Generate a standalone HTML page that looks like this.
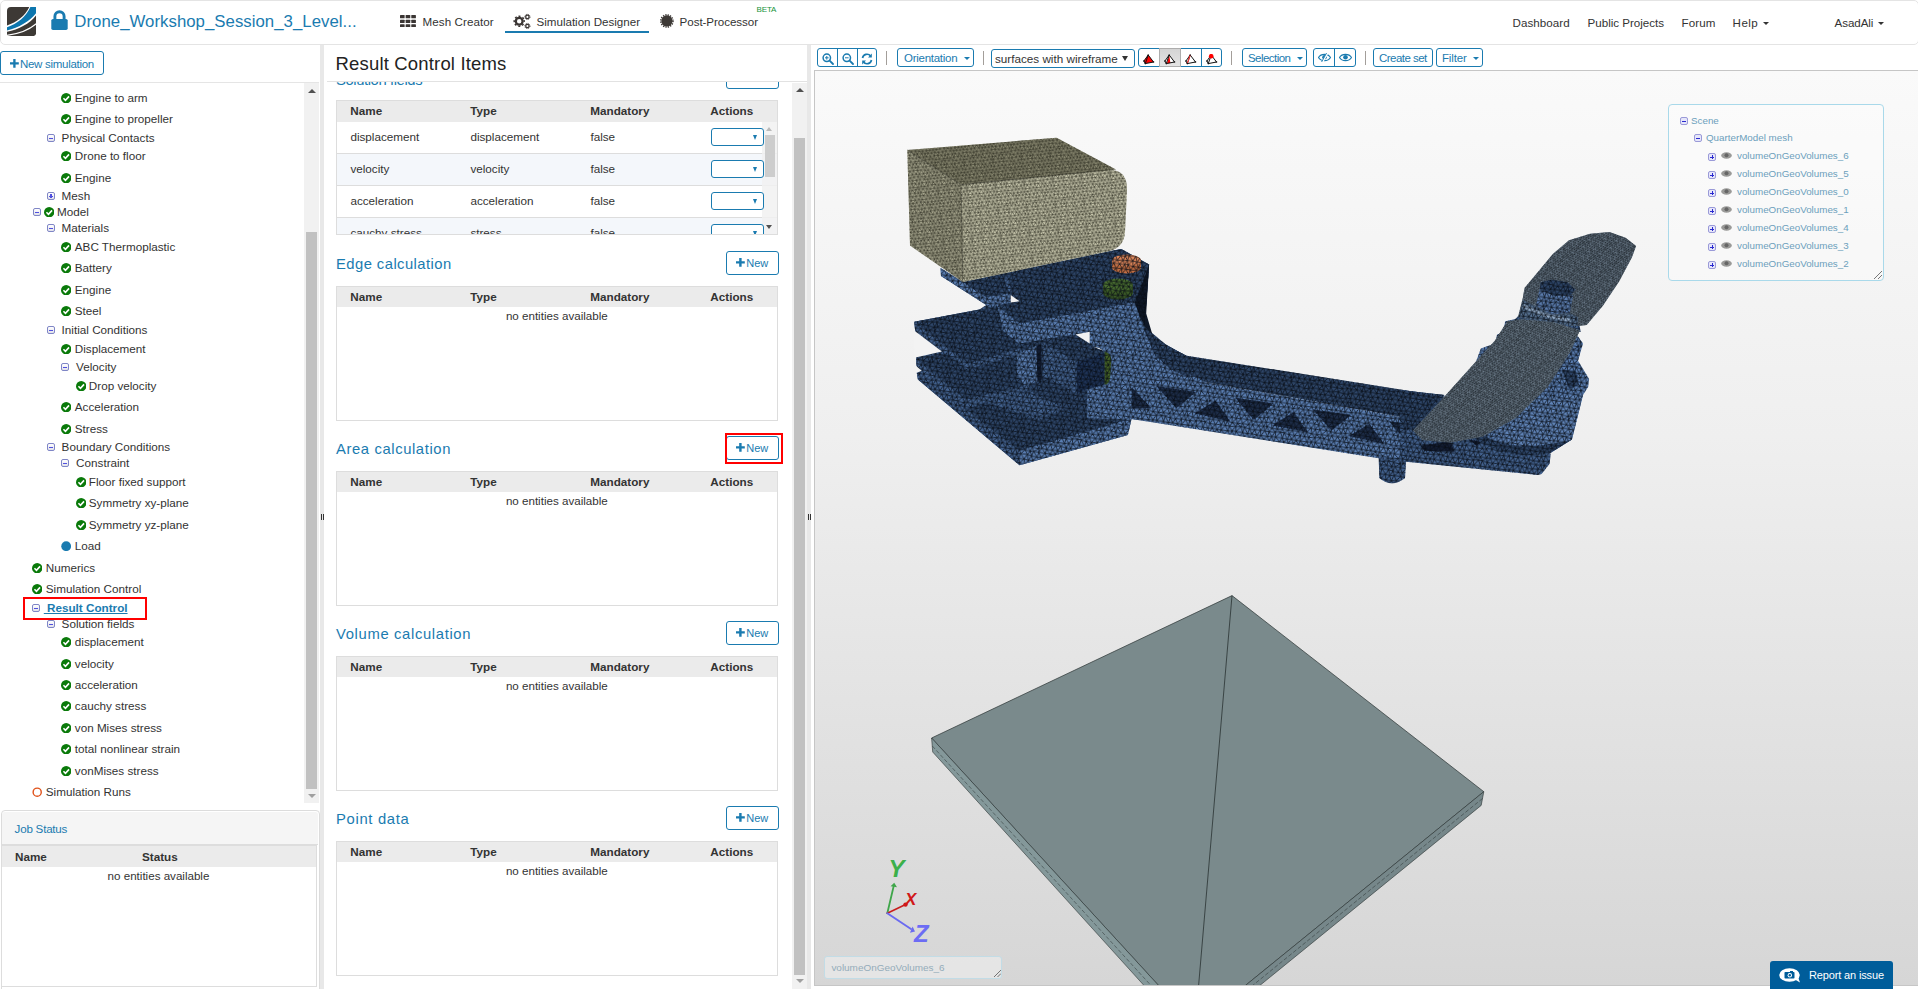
<!DOCTYPE html><html><head><meta charset="utf-8"><title>SimScale - Result Control Items</title><style>
*{box-sizing:border-box;margin:0;padding:0}
html,body{width:1918px;height:989px;overflow:hidden;background:#fff}
body{font-family:"Liberation Sans",sans-serif;font-size:12px;color:#333;position:relative}
.abs{position:absolute}
.lato{font-family:"Liberation Sans",sans-serif}
.t{position:absolute;white-space:nowrap;line-height:1}
.blue{color:#1a7bb0}
.btn{position:absolute;border:1px solid #1a7bb0;border-radius:3px;background:#fff;color:#1a7bb0}
#nav{position:absolute;left:0;top:0;width:1919px;height:45px;border:1px solid #e4e4e4;border-radius:5px;background:#fff}
.tr{position:absolute;white-space:nowrap;font-size:11.7px;line-height:14px;color:#333;height:14px}
.ck{position:absolute;width:10.4px;height:10.4px}
.tg{position:absolute;width:8.4px;height:8.4px;border:1px solid #7f86c6;border-radius:2px;background:linear-gradient(#fff,#e2e2ea)}
.tg i{position:absolute;left:1.2px;top:2.5px;width:4px;height:1.5px;background:#5050e0;display:block}
.tg b{position:absolute;left:2.4px;top:1.3px;width:1.6px;height:4px;background:#5050e0;display:block}
.th{position:absolute;background:#ebebeb;height:20px}
.th span{position:absolute;top:3.2px;font-weight:bold;font-size:11.7px;line-height:14px;color:#333}
.tb{position:absolute;border:1px solid #ddd;background:#fff}
.nea{position:absolute;font-size:11.6px;line-height:14px;color:#333;white-space:nowrap}
.h3{position:absolute;color:#1a7bb0;font-size:14.8px;line-height:20px;white-space:nowrap}
.sel{position:absolute;border:1px solid #1a7bb0;border-radius:3px;background:#fff;width:53px;height:18px}
.sel:after{content:"";position:absolute;right:6px;top:6px;border-left:2.6px solid transparent;border-right:2.6px solid transparent;border-top:5px solid #1a7bb0}
.tbtn{position:absolute;top:48px;height:19px;border:1px solid #1a7bb0;border-radius:3px;background:#fff;color:#1a7bb0;font-size:11.5px;line-height:18.6px;white-space:nowrap}
.sep{position:absolute;top:51px;width:1.4px;height:14px;background:#a39e9a}
.caret{display:inline-block;border-left:3px solid transparent;border-right:3px solid transparent;border-top:3px solid currentColor;vertical-align:middle}
.st{position:absolute;font-size:9.8px;line-height:12px;color:#6c9fbc;white-space:nowrap}
</style></head><body>
<div id="nav"></div>
<svg class="abs" style="left:6.8px;top:6.8px" width="29.3" height="29.2" viewBox="0 0 29.3 29.2">
<defs><clipPath id="lg"><path d="M4 0 H29.3 V25.2 A4 4 0 0 1 25.3 29.2 H0 V4 A4 4 0 0 1 4 0 Z"/></clipPath></defs>
<g clip-path="url(#lg)"><rect width="29.3" height="29.2" fill="#3d3935"/>
<path d="M0 18.5 C10 15 18 9 22.3 0 L29.3 0 L29.3 8 C23 16.5 12 22.3 0 24.7 Z" fill="#fff"/>
<path d="M0 20.2 C10.5 16.6 19 10 23.4 0 L29.3 0 L29.3 5.8 C23 14.3 12 20.4 0 23.5 Z" fill="#0c76ae"/>
<path d="M0 28.3 C12 27 22 23 29.3 16.8" fill="none" stroke="#fff" stroke-width="1.2"/>
</g></svg>
<svg class="abs" style="left:51px;top:10px" width="17" height="20" viewBox="0 0 17 20">
<path d="M3.9 9.5 V6.3 a4.6 4.6 0 0 1 9.2 0 V9.5" fill="none" stroke="#1a7bb0" stroke-width="2.9"/>
<rect x="0.3" y="8.9" width="16.4" height="11" rx="1.7" fill="#1a7bb0"/></svg>
<div class="t blue" id="title" style="left:74.3px;top:14.08px;font-size:16.8px;letter-spacing:0.028px">Drone_Workshop_Session_3_Level...</div>
<svg class="abs" style="left:400.2px;top:14.6px" width="15.8" height="12.4" viewBox="0 0 14 12" fill="#3a3533" preserveAspectRatio="none">
<rect x="0" y="0" width="4.1" height="3.2" rx="0.5"/><rect x="5" y="0" width="4.1" height="3.2" rx="0.5"/><rect x="10" y="0" width="4.1" height="3.2" rx="0.5"/>
<rect x="0" y="4.5" width="4.1" height="3.2" rx="0.5"/><rect x="5" y="4.5" width="4.1" height="3.2" rx="0.5"/><rect x="10" y="4.5" width="4.1" height="3.2" rx="0.5"/>
<rect x="0" y="9" width="4.1" height="3.2" rx="0.5"/><rect x="5" y="9" width="4.1" height="3.2" rx="0.5"/><rect x="10" y="9" width="4.1" height="3.2" rx="0.5"/></svg>
<div class="t" id="n1" style="left:422.6px;top:16.08px;font-size:11.6px;letter-spacing:0.07px">Mesh Creator</div>
<svg class="abs" style="left:512px;top:12px" width="20" height="20" viewBox="512 12 20 20">
<g fill="none" stroke="#3a3533"><circle cx="519.2" cy="21.3" r="3.4" stroke-width="2.3"/><circle cx="519.2" cy="21.3" r="5" stroke-width="1.5" stroke-dasharray="1.9 2.027" transform="rotate(-14 519.2 21.3)"/>
<circle cx="527.4" cy="16.9" r="1.7" stroke-width="1.3"/><circle cx="527.4" cy="16.9" r="2.6" stroke-width="1" stroke-dasharray="1 1.042"/>
<circle cx="527.4" cy="26" r="1.7" stroke-width="1.3"/><circle cx="527.4" cy="26" r="2.6" stroke-width="1" stroke-dasharray="1 1.042"/></g></svg>
<div class="t" id="n2" style="left:536.6px;top:16.08px;font-size:11.6px;letter-spacing:-0.019px">Simulation Designer</div>
<div class="abs" style="left:505px;top:31px;width:144px;height:2px;background:#1a7bb0"></div>
<svg class="abs" style="left:659px;top:13.4px" width="16" height="16" viewBox="0 0 16 16"><circle cx="7.9" cy="7.95" r="5.6" fill="#3d3936"/><circle cx="7.9" cy="7.95" r="6.1" fill="none" stroke="#3d3936" stroke-width="1.5" stroke-dasharray="1.3 1.096"/></svg>
<div class="t" id="n3" style="left:679.6px;top:16.08px;font-size:11.6px;letter-spacing:-0.057px">Post-Processor</div>
<div class="t" style="left:756.6px;top:6.2px;font-size:8px;color:#14943a;letter-spacing:-0.15px">BETA</div>
<div class="t" id="r0" style="left:1512.6px;top:17.08px;font-size:11.6px;letter-spacing:0.048px">Dashboard</div>
<div class="t" id="r1" style="left:1587.6px;top:17.08px;font-size:11.6px;letter-spacing:-0.02px">Public Projects</div>
<div class="t" id="r2" style="left:1681.6px;top:17.08px;font-size:11.6px;letter-spacing:0.075px">Forum</div>
<div class="t" id="r3" style="left:1732.6px;top:17.08px;font-size:11.6px;letter-spacing:0.418px">Help</div>
<div class="t" id="r4" style="left:1834.6px;top:17.08px;font-size:11.6px;letter-spacing:-0.086px">AsadAli</div>
<div class="abs caret" style="left:1762.5px;top:22px;color:#333"></div><div class="abs caret" style="left:1878.3px;top:22px;color:#333"></div>
<div class="btn" style="left:0;top:51px;width:104px;height:24px"></div>
<svg class="abs" style="left:10px;top:59.4px" width="8.8" height="8.8" viewBox="0 0 9 9"><path d="M4.5 0 V9 M0 4.5 H9" stroke="#1a7bb0" stroke-width="2.4"/></svg>
<div class="t blue" id="newsim" style="left:20px;top:59.27px;font-size:11.5px;letter-spacing:-0.291px">New simulation</div>
<div class="abs" style="left:0;top:82px;width:319px;height:1px;background:#e5e5e5"></div>
<svg class="ck" style="left:61px;top:92.8px" viewBox="0 0 11 11"><circle cx="5.5" cy="5.5" r="5.5" fill="#0a7a0a"/><path d="M2.6 5.6 L4.7 7.7 L8.5 3.6" fill="none" stroke="#fff" stroke-width="1.7"/></svg>
<div class="tr" style="left:74.8px;top:90.5px">Engine to arm</div>
<svg class="ck" style="left:61px;top:113.8px" viewBox="0 0 11 11"><circle cx="5.5" cy="5.5" r="5.5" fill="#0a7a0a"/><path d="M2.6 5.6 L4.7 7.7 L8.5 3.6" fill="none" stroke="#fff" stroke-width="1.7"/></svg>
<div class="tr" style="left:74.8px;top:111.5px">Engine to propeller</div>
<div class="tg" style="left:47px;top:134px"><i></i></div>
<div class="tr" style="left:61.6px;top:130.5px">Physical Contacts</div>
<svg class="ck" style="left:61px;top:150.8px" viewBox="0 0 11 11"><circle cx="5.5" cy="5.5" r="5.5" fill="#0a7a0a"/><path d="M2.6 5.6 L4.7 7.7 L8.5 3.6" fill="none" stroke="#fff" stroke-width="1.7"/></svg>
<div class="tr" style="left:74.8px;top:148.5px">Drone to floor</div>
<svg class="ck" style="left:61px;top:172.8px" viewBox="0 0 11 11"><circle cx="5.5" cy="5.5" r="5.5" fill="#0a7a0a"/><path d="M2.6 5.6 L4.7 7.7 L8.5 3.6" fill="none" stroke="#fff" stroke-width="1.7"/></svg>
<div class="tr" style="left:74.8px;top:170.5px">Engine</div>
<div class="tg" style="left:47px;top:192px"><i></i><b></b></div>
<div class="tr" style="left:61.6px;top:188.5px">Mesh</div>
<div class="tg" style="left:33px;top:208px"><i></i></div>
<svg class="ck" style="left:43.7px;top:206.8px" viewBox="0 0 11 11"><circle cx="5.5" cy="5.5" r="5.5" fill="#0a7a0a"/><path d="M2.6 5.6 L4.7 7.7 L8.5 3.6" fill="none" stroke="#fff" stroke-width="1.7"/></svg>
<div class="tr" style="left:57px;top:204.5px">Model</div>
<div class="tg" style="left:47px;top:224px"><i></i></div>
<div class="tr" style="left:61.6px;top:220.5px">Materials</div>
<svg class="ck" style="left:61px;top:241.8px" viewBox="0 0 11 11"><circle cx="5.5" cy="5.5" r="5.5" fill="#0a7a0a"/><path d="M2.6 5.6 L4.7 7.7 L8.5 3.6" fill="none" stroke="#fff" stroke-width="1.7"/></svg>
<div class="tr" style="left:74.8px;top:239.5px">ABC Thermoplastic</div>
<svg class="ck" style="left:61px;top:262.8px" viewBox="0 0 11 11"><circle cx="5.5" cy="5.5" r="5.5" fill="#0a7a0a"/><path d="M2.6 5.6 L4.7 7.7 L8.5 3.6" fill="none" stroke="#fff" stroke-width="1.7"/></svg>
<div class="tr" style="left:74.8px;top:260.5px">Battery</div>
<svg class="ck" style="left:61px;top:284.8px" viewBox="0 0 11 11"><circle cx="5.5" cy="5.5" r="5.5" fill="#0a7a0a"/><path d="M2.6 5.6 L4.7 7.7 L8.5 3.6" fill="none" stroke="#fff" stroke-width="1.7"/></svg>
<div class="tr" style="left:74.8px;top:282.5px">Engine</div>
<svg class="ck" style="left:61px;top:305.8px" viewBox="0 0 11 11"><circle cx="5.5" cy="5.5" r="5.5" fill="#0a7a0a"/><path d="M2.6 5.6 L4.7 7.7 L8.5 3.6" fill="none" stroke="#fff" stroke-width="1.7"/></svg>
<div class="tr" style="left:74.8px;top:303.5px">Steel</div>
<div class="tg" style="left:47px;top:326px"><i></i></div>
<div class="tr" style="left:61.6px;top:322.5px">Initial Conditions</div>
<svg class="ck" style="left:61px;top:343.8px" viewBox="0 0 11 11"><circle cx="5.5" cy="5.5" r="5.5" fill="#0a7a0a"/><path d="M2.6 5.6 L4.7 7.7 L8.5 3.6" fill="none" stroke="#fff" stroke-width="1.7"/></svg>
<div class="tr" style="left:74.8px;top:341.5px">Displacement</div>
<div class="tg" style="left:61px;top:363px"><i></i></div>
<div class="tr" style="left:76.1px;top:359.5px">Velocity</div>
<svg class="ck" style="left:76px;top:380.8px" viewBox="0 0 11 11"><circle cx="5.5" cy="5.5" r="5.5" fill="#0a7a0a"/><path d="M2.6 5.6 L4.7 7.7 L8.5 3.6" fill="none" stroke="#fff" stroke-width="1.7"/></svg>
<div class="tr" style="left:88.8px;top:378.5px">Drop velocity</div>
<svg class="ck" style="left:61px;top:401.8px" viewBox="0 0 11 11"><circle cx="5.5" cy="5.5" r="5.5" fill="#0a7a0a"/><path d="M2.6 5.6 L4.7 7.7 L8.5 3.6" fill="none" stroke="#fff" stroke-width="1.7"/></svg>
<div class="tr" style="left:74.8px;top:399.5px">Acceleration</div>
<svg class="ck" style="left:61px;top:423.8px" viewBox="0 0 11 11"><circle cx="5.5" cy="5.5" r="5.5" fill="#0a7a0a"/><path d="M2.6 5.6 L4.7 7.7 L8.5 3.6" fill="none" stroke="#fff" stroke-width="1.7"/></svg>
<div class="tr" style="left:74.8px;top:421.5px">Stress</div>
<div class="tg" style="left:47px;top:443px"><i></i></div>
<div class="tr" style="left:61.6px;top:439.5px">Boundary Conditions</div>
<div class="tg" style="left:61px;top:459px"><i></i></div>
<div class="tr" style="left:76.1px;top:455.5px">Constraint</div>
<svg class="ck" style="left:76px;top:476.8px" viewBox="0 0 11 11"><circle cx="5.5" cy="5.5" r="5.5" fill="#0a7a0a"/><path d="M2.6 5.6 L4.7 7.7 L8.5 3.6" fill="none" stroke="#fff" stroke-width="1.7"/></svg>
<div class="tr" style="left:88.8px;top:474.5px">Floor fixed support</div>
<svg class="ck" style="left:76px;top:497.8px" viewBox="0 0 11 11"><circle cx="5.5" cy="5.5" r="5.5" fill="#0a7a0a"/><path d="M2.6 5.6 L4.7 7.7 L8.5 3.6" fill="none" stroke="#fff" stroke-width="1.7"/></svg>
<div class="tr" style="left:88.8px;top:495.5px">Symmetry xy-plane</div>
<svg class="ck" style="left:76px;top:519.8px" viewBox="0 0 11 11"><circle cx="5.5" cy="5.5" r="5.5" fill="#0a7a0a"/><path d="M2.6 5.6 L4.7 7.7 L8.5 3.6" fill="none" stroke="#fff" stroke-width="1.7"/></svg>
<div class="tr" style="left:88.8px;top:517.5px">Symmetry yz-plane</div>
<svg class="ck" style="left:61px;top:540.5px" viewBox="0 0 11 11"><circle cx="5.5" cy="5.5" r="5.2" fill="#1a7bb0"/></svg>
<div class="tr" style="left:74.8px;top:538.5px">Load</div>
<svg class="ck" style="left:32px;top:562.8px" viewBox="0 0 11 11"><circle cx="5.5" cy="5.5" r="5.5" fill="#0a7a0a"/><path d="M2.6 5.6 L4.7 7.7 L8.5 3.6" fill="none" stroke="#fff" stroke-width="1.7"/></svg>
<div class="tr" style="left:45.8px;top:560.5px">Numerics</div>
<svg class="ck" style="left:32px;top:583.8px" viewBox="0 0 11 11"><circle cx="5.5" cy="5.5" r="5.5" fill="#0a7a0a"/><path d="M2.6 5.6 L4.7 7.7 L8.5 3.6" fill="none" stroke="#fff" stroke-width="1.7"/></svg>
<div class="tr" style="left:45.8px;top:581.5px">Simulation Control</div>
<div class="tg" style="left:32px;top:604px"><i></i></div>
<div class="tr" style="left:43.8px;top:600.5px;font-weight:bold;color:#1a7bb0;text-decoration:underline">&nbsp;Result Control</div>
<div class="tg" style="left:47px;top:620px"><i></i></div>
<div class="tr" style="left:61.6px;top:616.5px">Solution fields</div>
<svg class="ck" style="left:61px;top:636.8px" viewBox="0 0 11 11"><circle cx="5.5" cy="5.5" r="5.5" fill="#0a7a0a"/><path d="M2.6 5.6 L4.7 7.7 L8.5 3.6" fill="none" stroke="#fff" stroke-width="1.7"/></svg>
<div class="tr" style="left:74.8px;top:634.5px">displacement</div>
<svg class="ck" style="left:61px;top:658.8px" viewBox="0 0 11 11"><circle cx="5.5" cy="5.5" r="5.5" fill="#0a7a0a"/><path d="M2.6 5.6 L4.7 7.7 L8.5 3.6" fill="none" stroke="#fff" stroke-width="1.7"/></svg>
<div class="tr" style="left:74.8px;top:656.5px">velocity</div>
<svg class="ck" style="left:61px;top:679.8px" viewBox="0 0 11 11"><circle cx="5.5" cy="5.5" r="5.5" fill="#0a7a0a"/><path d="M2.6 5.6 L4.7 7.7 L8.5 3.6" fill="none" stroke="#fff" stroke-width="1.7"/></svg>
<div class="tr" style="left:74.8px;top:677.5px">acceleration</div>
<svg class="ck" style="left:61px;top:700.8px" viewBox="0 0 11 11"><circle cx="5.5" cy="5.5" r="5.5" fill="#0a7a0a"/><path d="M2.6 5.6 L4.7 7.7 L8.5 3.6" fill="none" stroke="#fff" stroke-width="1.7"/></svg>
<div class="tr" style="left:74.8px;top:698.5px">cauchy stress</div>
<svg class="ck" style="left:61px;top:722.8px" viewBox="0 0 11 11"><circle cx="5.5" cy="5.5" r="5.5" fill="#0a7a0a"/><path d="M2.6 5.6 L4.7 7.7 L8.5 3.6" fill="none" stroke="#fff" stroke-width="1.7"/></svg>
<div class="tr" style="left:74.8px;top:720.5px">von Mises stress</div>
<svg class="ck" style="left:61px;top:743.8px" viewBox="0 0 11 11"><circle cx="5.5" cy="5.5" r="5.5" fill="#0a7a0a"/><path d="M2.6 5.6 L4.7 7.7 L8.5 3.6" fill="none" stroke="#fff" stroke-width="1.7"/></svg>
<div class="tr" style="left:74.8px;top:741.5px">total nonlinear strain</div>
<svg class="ck" style="left:61px;top:765.8px" viewBox="0 0 11 11"><circle cx="5.5" cy="5.5" r="5.5" fill="#0a7a0a"/><path d="M2.6 5.6 L4.7 7.7 L8.5 3.6" fill="none" stroke="#fff" stroke-width="1.7"/></svg>
<div class="tr" style="left:74.8px;top:763.5px">vonMises stress</div>
<svg class="ck" style="left:32px;top:786.5px" viewBox="0 0 11 11"><circle cx="5.5" cy="5.5" r="4.3" fill="#fff" stroke="#e0521a" stroke-width="1.5"/></svg>
<div class="tr" style="left:45.8px;top:784.5px">Simulation Runs</div>
<div class="abs" style="left:23px;top:597px;width:124px;height:23px;border:2px solid #ff0000"></div>
<div class="abs" style="left:304px;top:83px;width:15px;height:720px;background:#f1f1f1"></div>
<div class="abs" style="left:306px;top:232px;width:11px;height:557px;background:#c1c1c1"></div>
<div class="abs" style="left:307.5px;top:89px;border-left:4px solid transparent;border-right:4px solid transparent;border-bottom:4.5px solid #505050"></div>
<div class="abs" style="left:307.5px;top:794px;border-left:4px solid transparent;border-right:4px solid transparent;border-top:4.5px solid #a0a0a0"></div>
<div class="abs" style="left:0.5px;top:810.4px;width:319px;height:181px;border:1px solid #dcdcdc;border-radius:4px 4px 0 0;background:#fff"></div>
<div class="abs" style="left:2px;top:812px;width:316px;height:33px;background:#f5f5f5;border-bottom:1px solid #ddd;border-radius:3px 3px 0 0"></div>
<div class="t blue" id="js" style="left:14.6px;top:822.98px;font-size:11.6px;letter-spacing:-0.221px">Job Status</div>
<div class="tb" style="left:1px;top:845px;width:316px;height:142px"></div>
<div class="th" style="left:2px;top:846px;width:314px;height:21px"><span style="left:13px;top:4.2px">Name</span><span style="left:140px;top:4.2px">Status</span></div>
<div class="nea" id="nea0" style="left:107.6px;top:869.3px;letter-spacing:-0.002px">no entities available</div>
<div class="abs" style="left:320px;top:45px;width:4px;height:944px;background:#e8e8e8"></div>
<div class="abs" style="left:807px;top:45px;width:4px;height:944px;background:#e8e8e8"></div>
<div class="abs" style="left:321px;top:514px;width:1px;height:6px;background:#333"></div><div class="abs" style="left:323px;top:514px;width:1px;height:6px;background:#333"></div>
<div class="abs" style="left:808px;top:514px;width:1px;height:6px;background:#333"></div><div class="abs" style="left:810px;top:514px;width:1px;height:6px;background:#333"></div>
<div class="abs" style="left:325px;top:82px;width:467px;height:907px;overflow:hidden">
<div class="h3" style="left:11px;top:-12.33px;letter-spacing:-0.4px">Solution fields</div>
<div class="btn" style="left:401px;top:-16.7px;width:53px;height:24px"></div><svg class="abs" style="left:411px;top:-9.5px" width="8.8" height="8.8" viewBox="0 0 9 9"><path d="M4.5 0 V9 M0 4.5 H9" stroke="#1a7bb0" stroke-width="2.5"/></svg><div class="t blue" style="left:421.3px;top:-9.3115px;font-size:11px;letter-spacing:-0.1px">New</div>
<div class="tb" style="left:11px;top:18px;width:442px;height:135px;overflow:hidden">
<div class="abs" style="left:0;top:21px;width:440px;height:32px;background:#fff;border-bottom:1px solid #ddd"></div>
<div class="tr" style="left:13.4px;top:29px">displacement</div>
<div class="tr" style="left:133.4px;top:29px">displacement</div>
<div class="tr" style="left:253.4px;top:29px">false</div>
<div class="abs" style="left:0;top:53px;width:440px;height:32px;background:#f4f7fb;border-bottom:1px solid #ddd"></div>
<div class="tr" style="left:13.4px;top:61px">velocity</div>
<div class="tr" style="left:133.4px;top:61px">velocity</div>
<div class="tr" style="left:253.4px;top:61px">false</div>
<div class="abs" style="left:0;top:85px;width:440px;height:32px;background:#fff;border-bottom:1px solid #ddd"></div>
<div class="tr" style="left:13.4px;top:93px">acceleration</div>
<div class="tr" style="left:133.4px;top:93px">acceleration</div>
<div class="tr" style="left:253.4px;top:93px">false</div>
<div class="abs" style="left:0;top:117px;width:440px;height:32px;background:#f4f7fb;border-bottom:1px solid #ddd"></div>
<div class="tr" style="left:13.4px;top:125px">cauchy stress</div>
<div class="tr" style="left:133.4px;top:125px">stress</div>
<div class="tr" style="left:253.4px;top:125px">false</div>
<div class="abs" style="left:425px;top:21px;width:15px;height:113px;background:rgba(241,241,241,0.85)"></div>
<div class="abs" style="left:427.5px;top:34px;width:10.5px;height:42px;background:#cdcdcd"></div>
<div class="sel" style="left:374px;top:26.6px"></div>
<div class="sel" style="left:374px;top:58.6px"></div>
<div class="sel" style="left:374px;top:90.6px"></div>
<div class="sel" style="left:374px;top:122.6px"></div>
<div class="abs" style="left:429px;top:26px;border-left:3.5px solid transparent;border-right:3.5px solid transparent;border-bottom:4px solid #bbb"></div>
<div class="abs" style="left:429px;top:124px;border-left:3.5px solid transparent;border-right:3.5px solid transparent;border-top:4px solid #505050"></div>
</div>
<div class="th" style="height:21px;left:12px;top:19px;width:440px"><span style="left:13.3px">Name</span><span style="left:133.3px">Type</span><span style="left:253.3px">Mandatory</span><span style="left:373.3px">Actions</span></div>
<div class="h3" id="h_Edge" style="left:11px;top:171.67px;letter-spacing:0.441px">Edge calculation</div>
<div class="btn" style="left:401px;top:169px;width:53px;height:24px"></div><svg class="abs" style="left:411px;top:176.2px" width="8.8" height="8.8" viewBox="0 0 9 9"><path d="M4.5 0 V9 M0 4.5 H9" stroke="#1a7bb0" stroke-width="2.5"/></svg><div class="t blue" style="left:421.3px;top:176.388px;font-size:11px;letter-spacing:-0.1px">New</div>
<div class="tb" style="left:11px;top:204px;width:442px;height:135px"></div>
<div class="th" style="left:12px;top:205px;width:440px"><span style="left:13.3px">Name</span><span style="left:133.3px">Type</span><span style="left:253.3px">Mandatory</span><span style="left:373.3px">Actions</span></div>
<div class="nea" style="left:180.9px;top:226.8px;letter-spacing:-0.002px">no entities available</div>
<div class="h3" id="h_Area" style="left:11px;top:356.67px;letter-spacing:0.607px">Area calculation</div>
<div class="btn" style="left:401px;top:354px;width:53px;height:24px"></div><svg class="abs" style="left:411px;top:361.2px" width="8.8" height="8.8" viewBox="0 0 9 9"><path d="M4.5 0 V9 M0 4.5 H9" stroke="#1a7bb0" stroke-width="2.5"/></svg><div class="t blue" style="left:421.3px;top:361.388px;font-size:11px;letter-spacing:-0.1px">New</div>
<div class="tb" style="left:11px;top:389px;width:442px;height:135px"></div>
<div class="th" style="left:12px;top:390px;width:440px"><span style="left:13.3px">Name</span><span style="left:133.3px">Type</span><span style="left:253.3px">Mandatory</span><span style="left:373.3px">Actions</span></div>
<div class="nea" style="left:180.9px;top:411.8px;letter-spacing:-0.002px">no entities available</div>
<div class="h3" id="h_Volu" style="left:11px;top:541.67px;letter-spacing:0.653px">Volume calculation</div>
<div class="btn" style="left:401px;top:539px;width:53px;height:24px"></div><svg class="abs" style="left:411px;top:546.2px" width="8.8" height="8.8" viewBox="0 0 9 9"><path d="M4.5 0 V9 M0 4.5 H9" stroke="#1a7bb0" stroke-width="2.5"/></svg><div class="t blue" style="left:421.3px;top:546.389px;font-size:11px;letter-spacing:-0.1px">New</div>
<div class="tb" style="left:11px;top:574px;width:442px;height:135px"></div>
<div class="th" style="left:12px;top:575px;width:440px"><span style="left:13.3px">Name</span><span style="left:133.3px">Type</span><span style="left:253.3px">Mandatory</span><span style="left:373.3px">Actions</span></div>
<div class="nea" style="left:180.9px;top:596.8px;letter-spacing:-0.002px">no entities available</div>
<div class="h3" id="h_Poin" style="left:11px;top:726.67px;letter-spacing:0.673px">Point data</div>
<div class="btn" style="left:401px;top:724px;width:53px;height:24px"></div><svg class="abs" style="left:411px;top:731.2px" width="8.8" height="8.8" viewBox="0 0 9 9"><path d="M4.5 0 V9 M0 4.5 H9" stroke="#1a7bb0" stroke-width="2.5"/></svg><div class="t blue" style="left:421.3px;top:731.389px;font-size:11px;letter-spacing:-0.1px">New</div>
<div class="tb" style="left:11px;top:759px;width:442px;height:135px"></div>
<div class="th" style="left:12px;top:760px;width:440px"><span style="left:13.3px">Name</span><span style="left:133.3px">Type</span><span style="left:253.3px">Mandatory</span><span style="left:373.3px">Actions</span></div>
<div class="nea" style="left:180.9px;top:781.8px;letter-spacing:-0.002px">no entities available</div>
<div class="abs" style="left:400px;top:351px;width:58px;height:31px;border:2px solid #ff0000"></div>
</div>
<div class="abs" style="left:325px;top:45px;width:482px;height:37px;background:#fff"></div><div class="abs" style="left:327px;top:81px;width:480px;height:1px;background:#e2e2e2"></div>
<div class="t" id="rci" style="left:335.6px;top:54.84px;font-size:18.5px;color:#222;letter-spacing:0.164px">Result Control Items</div>
<div class="abs" style="left:792px;top:83px;width:15px;height:906px;background:#f1f1f1"></div>
<div class="abs" style="left:794px;top:138px;width:11px;height:837px;background:#c1c1c1"></div>
<div class="abs" style="left:795.5px;top:88px;border-left:4px solid transparent;border-right:4px solid transparent;border-bottom:4.5px solid #505050"></div>
<div class="abs" style="left:795.5px;top:979px;border-left:4px solid transparent;border-right:4px solid transparent;border-top:4.5px solid #a0a0a0"></div>
<div class="tbtn" style="left:817px;width:60px;"></div>
<div class="abs" style="left:837px;top:48px;width:1px;height:19px;background:#1a7bb0"></div><div class="abs" style="left:857px;top:48px;width:1px;height:19px;background:#1a7bb0"></div>
<svg class="abs" style="left:822px;top:53px" width="12" height="12" viewBox="0 0 12 12"><circle cx="4.8" cy="4.8" r="3.7" fill="none" stroke="#1a7bb0" stroke-width="1.5"/><path d="M7.6 7.6 L11 11" stroke="#1a7bb0" stroke-width="1.8" stroke-linecap="round"/><path d="M3 4.8 H6.6" stroke="#1a7bb0" stroke-width="1"/><path d="M4.8 3 V6.6" stroke="#1a7bb0" stroke-width="1"/></svg>
<svg class="abs" style="left:842px;top:53px" width="12" height="12" viewBox="0 0 12 12"><circle cx="4.8" cy="4.8" r="3.7" fill="none" stroke="#1a7bb0" stroke-width="1.5"/><path d="M7.6 7.6 L11 11" stroke="#1a7bb0" stroke-width="1.8" stroke-linecap="round"/><path d="M3 4.8 H6.6" stroke="#1a7bb0" stroke-width="1"/></svg>
<svg class="abs" style="left:861px;top:52.5px" width="12" height="12" viewBox="0 0 12 12"><path d="M1.5 5 A4.6 4.6 0 0 1 9.6 3" fill="none" stroke="#1a7bb0" stroke-width="1.7"/><path d="M10.8 0.6 V4.4 H7 Z" fill="#1a7bb0"/><path d="M10.5 7 A4.6 4.6 0 0 1 2.4 9" fill="none" stroke="#1a7bb0" stroke-width="1.7"/><path d="M1.2 11.4 V7.6 H5 Z" fill="#1a7bb0"/></svg>
<div class="sep" style="left:886px"></div>
<div class="tbtn" style="left:897px;width:77px;padding-left:6px"><span style="letter-spacing:-0.265px" id="ori">Orientation</span> &nbsp;<span class="caret"></span></div>
<div class="sep" style="left:983px"></div>
<div class="abs" style="left:991px;top:49px;width:144px;height:19px;border:1px solid #1a7bb0;border-radius:3px;background:#fff"></div>
<div class="t" id="sww" style="left:995px;top:52.5px;font-size:11.7px;color:#333">surfaces with wireframe</div>
<div class="abs" style="left:1122px;top:56px;border-left:3px solid transparent;border-right:3px solid transparent;border-top:5px solid #333"></div>
<div class="tbtn" style="left:1138px;width:84px;"></div>
<div class="abs" style="left:1159px;top:48px;width:22px;height:19px;background:linear-gradient(#d4d4d4,#e4e4e4);border:1px solid #adadad"></div>
<div class="abs" style="left:1201px;top:48px;width:1px;height:19px;background:#1a7bb0"></div>
<svg class="abs" style="left:1142.7px;top:53.5px" width="12" height="11" viewBox="0 0 12 11"><path d="M5.2 1 L0.9 7 L2.3 9.6 L10.5 8 Z" fill="#f00"/><path d="M5.2 1 L0.9 7 L2.3 9.6 L10.5 8 Z M5.2 1 L2.3 9.6" fill="none" stroke="#111" stroke-width="1" stroke-linejoin="round"/><circle cx="0.9" cy="7" r="0.8" fill="#111"/><circle cx="2.3" cy="9.6" r="0.8" fill="#111"/><circle cx="10.5" cy="8" r="0.8" fill="#111"/><circle cx="5.2" cy="1" r="0.8" fill="#111"/></svg>
<svg class="abs" style="left:1163.8px;top:53.5px" width="12" height="11" viewBox="0 0 12 11"><path d="M5.2 1 L0.9 7 L2.3 9.6 L10.5 8 Z" fill="#fff"/><path d="M5.2 1 L2.9 9.4 L6.4 8.9 Z" fill="#f00"/><path d="M5.2 1 L0.9 7 L2.3 9.6 L10.5 8 Z M5.2 1 L2.3 9.6" fill="none" stroke="#111" stroke-width="1" stroke-linejoin="round"/><circle cx="0.9" cy="7" r="0.8" fill="#111"/><circle cx="2.3" cy="9.6" r="0.8" fill="#111"/><circle cx="10.5" cy="8" r="0.8" fill="#111"/><circle cx="5.2" cy="1" r="0.8" fill="#111"/></svg>
<svg class="abs" style="left:1184.7px;top:53.5px" width="12" height="11" viewBox="0 0 12 11"><path d="M5.2 1 L0.9 7 L2.3 9.6 L10.5 8 Z" fill="#fff"/><path d="M5.2 1 L0.9 7 L2.3 9.6 L10.5 8 Z M5.2 1 L2.3 9.6" fill="none" stroke="#111" stroke-width="1" stroke-linejoin="round"/><path d="M5.2 1 L2.3 9.6" stroke="#f33" stroke-width="1.1"/><circle cx="0.9" cy="7" r="0.8" fill="#111"/><circle cx="2.3" cy="9.6" r="0.8" fill="#111"/><circle cx="10.5" cy="8" r="0.8" fill="#111"/><circle cx="5.2" cy="1" r="0.8" fill="#111"/></svg>
<svg class="abs" style="left:1205.8px;top:53.5px" width="12" height="11" viewBox="0 0 12 11"><path d="M5.2 1 L0.9 7 L2.3 9.6 L10.5 8 Z" fill="#fff"/><path d="M5.2 1 L0.9 7 L2.3 9.6 L10.5 8 Z M5.2 1 L2.3 9.6" fill="none" stroke="#111" stroke-width="1" stroke-linejoin="round"/><circle cx="0.9" cy="7" r="0.8" fill="#111"/><circle cx="2.3" cy="9.6" r="0.8" fill="#111"/><circle cx="10.5" cy="8" r="0.8" fill="#111"/><circle cx="5.2" cy="2.2" r="2.3" fill="#f00"/></svg>
<div class="sep" style="left:1231px"></div>
<div class="tbtn" style="left:1242px;width:65px;padding-left:5px"><span style="letter-spacing:-0.551px" id="selb">Selection</span> &nbsp;<span class="caret"></span></div>
<div class="tbtn" style="left:1313px;width:43px;"></div>
<div class="abs" style="left:1334px;top:48px;width:1px;height:19px;background:#1a7bb0"></div>
<svg class="abs" style="left:1317.5px;top:53px" width="13" height="9" viewBox="0 0 13 9"><path d="M0.5 4.5 C3 0.3 10 0.3 12.5 4.5 C10 8.7 3 8.7 0.5 4.5 Z" fill="none" stroke="#1a7bb0" stroke-width="1.2"/><circle cx="6.5" cy="4.3" r="2.3" fill="#1a7bb0"/><path d="M9.5 0 L4.5 9" stroke="#fff" stroke-width="1.8"/><path d="M8.6 0 L3.6 9" stroke="#1a7bb0" stroke-width="0.9"/></svg>
<svg class="abs" style="left:1338.5px;top:53px" width="13" height="9" viewBox="0 0 13 9"><path d="M0.5 4.5 C3 0.3 10 0.3 12.5 4.5 C10 8.7 3 8.7 0.5 4.5 Z" fill="none" stroke="#1a7bb0" stroke-width="1.2"/><circle cx="6.5" cy="4.3" r="2.3" fill="#1a7bb0"/></svg>
<div class="sep" style="left:1365px"></div>
<div class="tbtn" style="left:1373px;width:60px;padding-left:5px"><span style="letter-spacing:-0.54px" id="cset">Create set</span></div>
<div class="tbtn" style="left:1436px;width:47px;padding-left:5px"><span style="letter-spacing:-0.152px" id="filt">Filter</span> &nbsp;<span class="caret"></span></div>
<div class="abs" id="viewer" style="left:814px;top:70px;width:1104px;height:916px;border:1px solid #c6c6c6;border-right:none;background:linear-gradient(#fafafa,#efefef 40%,#d6d6d6);overflow:hidden">
<svg class="abs" style="left:-815px;top:-71px" width="1918" height="989" viewBox="0 0 1918 989">
<defs>
<pattern id="mesh" width="40.00" height="35.20" patternUnits="userSpaceOnUse" patternTransform="rotate(8)"><path d="M-1.9 -4.9L2.4 -4.0M-1.9 -4.9L-6.0 -0.5M-1.9 -4.9L-0.8 0.7M2.4 -4.0L6.9 -4.9M2.4 -4.0L-0.8 0.7M2.4 -4.0L4.4 0.9M6.9 -4.9L13.5 -4.6M6.9 -4.9L4.4 0.9M6.9 -4.9L9.4 -0.1M13.5 -4.6L17.9 -4.1M13.5 -4.6L9.4 -0.1M13.5 -4.6L15.7 0.3M17.9 -4.1L22.5 -3.5M17.9 -4.1L15.7 0.3M17.9 -4.1L19.7 -0.1M22.5 -3.5L28.3 -3.9M22.5 -3.5L19.7 -0.1M22.5 -3.5L25.6 0.1M28.3 -3.9L32.7 -4.5M28.3 -3.9L25.6 0.1M28.3 -3.9L30.7 0.0M32.7 -4.5L38.1 -4.9M32.7 -4.5L30.7 0.0M32.7 -4.5L34.0 -0.5M38.1 -4.9L42.4 -4.0M38.1 -4.9L34.0 -0.5M38.1 -4.9L39.2 0.7M42.4 -4.0L46.9 -4.9M42.4 -4.0L39.2 0.7M42.4 -4.0L44.4 0.9M-6.0 -0.5L-0.8 0.7M-6.0 -0.5L-7.4 4.3M-6.0 -0.5L-3.2 4.6M-0.8 0.7L4.4 0.9M-0.8 0.7L-3.2 4.6M-0.8 0.7L3.1 3.9M4.4 0.9L9.4 -0.1M4.4 0.9L3.1 3.9M4.4 0.9L8.4 3.5M9.4 -0.1L15.7 0.3M9.4 -0.1L8.4 3.5M9.4 -0.1L12.0 3.5M15.7 0.3L19.7 -0.1M15.7 0.3L12.0 3.5M15.7 0.3L17.1 4.6M19.7 -0.1L25.6 0.1M19.7 -0.1L17.1 4.6M19.7 -0.1L22.5 4.9M25.6 0.1L30.7 0.0M25.6 0.1L22.5 4.9M25.6 0.1L28.3 3.9M30.7 0.0L34.0 -0.5M30.7 0.0L28.3 3.9M30.7 0.0L32.6 4.3M34.0 -0.5L39.2 0.7M34.0 -0.5L32.6 4.3M34.0 -0.5L36.8 4.6M39.2 0.7L44.4 0.9M39.2 0.7L36.8 4.6M39.2 0.7L43.1 3.9M-3.2 4.6L3.1 3.9M-3.2 4.6L-4.2 9.4M-3.2 4.6L-0.0 8.7M3.1 3.9L8.4 3.5M3.1 3.9L-0.0 8.7M3.1 3.9L4.0 8.9M8.4 3.5L12.0 3.5M8.4 3.5L4.0 8.9M8.4 3.5L10.7 8.9M12.0 3.5L17.1 4.6M12.0 3.5L10.7 8.9M12.0 3.5L15.8 9.5M17.1 4.6L22.5 4.9M17.1 4.6L15.8 9.5M17.1 4.6L20.0 8.6M22.5 4.9L28.3 3.9M22.5 4.9L20.0 8.6M22.5 4.9L25.0 9.7M28.3 3.9L32.6 4.3M28.3 3.9L25.0 9.7M28.3 3.9L29.0 9.5M32.6 4.3L36.8 4.6M32.6 4.3L29.0 9.5M32.6 4.3L35.8 9.4M36.8 4.6L43.1 3.9M36.8 4.6L35.8 9.4M36.8 4.6L40.0 8.7M43.1 3.9L48.4 3.5M43.1 3.9L40.0 8.7M43.1 3.9L44.0 8.9M-4.2 9.4L-0.0 8.7M-4.2 9.4L-7.3 12.6M-4.2 9.4L-1.8 13.8M-0.0 8.7L4.0 8.9M-0.0 8.7L-1.8 13.8M-0.0 8.7L2.8 13.8M4.0 8.9L10.7 8.9M4.0 8.9L2.8 13.8M4.0 8.9L8.5 13.0M10.7 8.9L15.8 9.5M10.7 8.9L8.5 13.0M10.7 8.9L12.8 12.6M15.8 9.5L20.0 8.6M15.8 9.5L12.8 12.6M15.8 9.5L17.5 13.4M20.0 8.6L25.0 9.7M20.0 8.6L17.5 13.4M20.0 8.6L22.5 12.3M25.0 9.7L29.0 9.5M25.0 9.7L22.5 12.3M25.0 9.7L27.7 13.1M29.0 9.5L35.8 9.4M29.0 9.5L27.7 13.1M29.0 9.5L32.7 12.6M35.8 9.4L40.0 8.7M35.8 9.4L32.7 12.6M35.8 9.4L38.2 13.8M40.0 8.7L44.0 8.9M40.0 8.7L38.2 13.8M40.0 8.7L42.8 13.8M-1.8 13.8L2.8 13.8M-1.8 13.8L-5.5 18.3M-1.8 13.8L-0.9 16.7M2.8 13.8L8.5 13.0M2.8 13.8L-0.9 16.7M2.8 13.8L4.4 17.4M8.5 13.0L12.8 12.6M8.5 13.0L4.4 17.4M8.5 13.0L11.1 18.3M12.8 12.6L17.5 13.4M12.8 12.6L11.1 18.3M12.8 12.6L14.0 17.1M17.5 13.4L22.5 12.3M17.5 13.4L14.0 17.1M17.5 13.4L19.0 18.0M22.5 12.3L27.7 13.1M22.5 12.3L19.0 18.0M22.5 12.3L24.5 17.7M27.7 13.1L32.7 12.6M27.7 13.1L24.5 17.7M27.7 13.1L30.0 17.6M32.7 12.6L38.2 13.8M32.7 12.6L30.0 17.6M32.7 12.6L34.5 18.3M38.2 13.8L42.8 13.8M38.2 13.8L34.5 18.3M38.2 13.8L39.1 16.7M42.8 13.8L48.5 13.0M42.8 13.8L39.1 16.7M42.8 13.8L44.4 17.4M-5.5 18.3L-0.9 16.7M-5.5 18.3L-7.8 21.7M-5.5 18.3L-2.1 21.2M-0.9 16.7L4.4 17.4M-0.9 16.7L-2.1 21.2M-0.9 16.7L3.2 21.9M4.4 17.4L11.1 18.3M4.4 17.4L3.2 21.9M4.4 17.4L6.5 21.5M11.1 18.3L14.0 17.1M11.1 18.3L6.5 21.5M11.1 18.3L11.7 21.7M14.0 17.1L19.0 18.0M14.0 17.1L11.7 21.7M14.0 17.1L18.2 21.8M19.0 18.0L24.5 17.7M19.0 18.0L18.2 21.8M19.0 18.0L23.6 22.2M24.5 17.7L30.0 17.6M24.5 17.7L23.6 22.2M24.5 17.7L28.5 21.0M30.0 17.6L34.5 18.3M30.0 17.6L28.5 21.0M30.0 17.6L32.2 21.7M34.5 18.3L39.1 16.7M34.5 18.3L32.2 21.7M34.5 18.3L37.9 21.2M39.1 16.7L44.4 17.4M39.1 16.7L37.9 21.2M39.1 16.7L43.2 21.9M-2.1 21.2L3.2 21.9M-2.1 21.2L-6.1 25.5M-2.1 21.2L0.6 25.4M3.2 21.9L6.5 21.5M3.2 21.9L0.6 25.4M3.2 21.9L4.9 26.4M6.5 21.5L11.7 21.7M6.5 21.5L4.9 26.4M6.5 21.5L10.5 26.8M11.7 21.7L18.2 21.8M11.7 21.7L10.5 26.8M11.7 21.7L14.3 26.5M18.2 21.8L23.6 22.2M18.2 21.8L14.3 26.5M18.2 21.8L19.8 25.8M23.6 22.2L28.5 21.0M23.6 22.2L19.8 25.8M23.6 22.2L25.6 27.0M28.5 21.0L32.2 21.7M28.5 21.0L25.6 27.0M28.5 21.0L30.1 26.6M32.2 21.7L37.9 21.2M32.2 21.7L30.1 26.6M32.2 21.7L33.9 25.5M37.9 21.2L43.2 21.9M37.9 21.2L33.9 25.5M37.9 21.2L40.6 25.4M43.2 21.9L46.5 21.5M43.2 21.9L40.6 25.4M43.2 21.9L44.9 26.4M-6.1 25.5L0.6 25.4M-6.1 25.5L-7.3 30.7M-6.1 25.5L-1.9 30.3M0.6 25.4L4.9 26.4M0.6 25.4L-1.9 30.3M0.6 25.4L2.4 31.2M4.9 26.4L10.5 26.8M4.9 26.4L2.4 31.2M4.9 26.4L6.9 30.3M10.5 26.8L14.3 26.5M10.5 26.8L6.9 30.3M10.5 26.8L13.5 30.6M14.3 26.5L19.8 25.8M14.3 26.5L13.5 30.6M14.3 26.5L17.9 31.1M19.8 25.8L25.6 27.0M19.8 25.8L17.9 31.1M19.8 25.8L22.5 31.7M25.6 27.0L30.1 26.6M25.6 27.0L22.5 31.7M25.6 27.0L28.3 31.3M30.1 26.6L33.9 25.5M30.1 26.6L28.3 31.3M30.1 26.6L32.7 30.7M33.9 25.5L40.6 25.4M33.9 25.5L32.7 30.7M33.9 25.5L38.1 30.3M40.6 25.4L44.9 26.4M40.6 25.4L38.1 30.3M40.6 25.4L42.4 31.2M-1.9 30.3L2.4 31.2M-1.9 30.3L-6.0 34.7M-1.9 30.3L-0.8 35.9M2.4 31.2L6.9 30.3M2.4 31.2L-0.8 35.9M2.4 31.2L4.4 36.1M6.9 30.3L13.5 30.6M6.9 30.3L4.4 36.1M6.9 30.3L9.4 35.1M13.5 30.6L17.9 31.1M13.5 30.6L9.4 35.1M13.5 30.6L15.7 35.5M17.9 31.1L22.5 31.7M17.9 31.1L15.7 35.5M17.9 31.1L19.7 35.1M22.5 31.7L28.3 31.3M22.5 31.7L19.7 35.1M22.5 31.7L25.6 35.3M28.3 31.3L32.7 30.7M28.3 31.3L25.6 35.3M28.3 31.3L30.7 35.2M32.7 30.7L38.1 30.3M32.7 30.7L30.7 35.2M32.7 30.7L34.0 34.7M38.1 30.3L42.4 31.2M38.1 30.3L34.0 34.7M38.1 30.3L39.2 35.9M42.4 31.2L46.9 30.3M42.4 31.2L39.2 35.9M42.4 31.2L44.4 36.1M-6.0 34.7L-0.8 35.9M-6.0 34.7L-7.4 39.5M-6.0 34.7L-3.2 39.8M-0.8 35.9L4.4 36.1M-0.8 35.9L-3.2 39.8M-0.8 35.9L3.1 39.1M4.4 36.1L9.4 35.1M4.4 36.1L3.1 39.1M4.4 36.1L8.4 38.7M9.4 35.1L15.7 35.5M9.4 35.1L8.4 38.7M9.4 35.1L12.0 38.7M15.7 35.5L19.7 35.1M15.7 35.5L12.0 38.7M15.7 35.5L17.1 39.8M19.7 35.1L25.6 35.3M19.7 35.1L17.1 39.8M19.7 35.1L22.5 40.1M25.6 35.3L30.7 35.2M25.6 35.3L22.5 40.1M25.6 35.3L28.3 39.1M30.7 35.2L34.0 34.7M30.7 35.2L28.3 39.1M30.7 35.2L32.6 39.5M34.0 34.7L39.2 35.9M34.0 34.7L32.6 39.5M34.0 34.7L36.8 39.8M39.2 35.9L44.4 36.1M39.2 35.9L36.8 39.8M39.2 35.9L43.1 39.1" fill="none" stroke="#050a12" stroke-width="0.75" /></pattern>
<pattern id="meshb" width="28.80" height="25.60" patternUnits="userSpaceOnUse" patternTransform="rotate(-6)"><path d="M-1.4 -2.9L2.1 -2.6M-1.4 -2.9L-4.1 0.2M-1.4 -2.9L0.7 0.6M2.1 -2.6L5.1 -3.7M2.1 -2.6L0.7 0.6M2.1 -2.6L4.2 0.1M5.1 -3.7L9.4 -2.9M5.1 -3.7L4.2 0.1M5.1 -3.7L7.2 0.6M9.4 -2.9L12.2 -3.4M9.4 -2.9L7.2 0.6M9.4 -2.9L10.7 0.0M12.2 -3.4L16.2 -2.6M12.2 -3.4L10.7 0.0M12.2 -3.4L14.7 -0.4M16.2 -2.6L20.3 -3.5M16.2 -2.6L14.7 -0.4M16.2 -2.6L18.2 -0.5M20.3 -3.5L23.9 -3.6M20.3 -3.5L18.2 -0.5M20.3 -3.5L21.2 0.5M23.9 -3.6L27.4 -2.9M23.9 -3.6L21.2 0.5M23.9 -3.6L24.7 0.2M27.4 -2.9L30.9 -2.6M27.4 -2.9L24.7 0.2M27.4 -2.9L29.5 0.6M30.9 -2.6L33.9 -3.7M30.9 -2.6L29.5 0.6M30.9 -2.6L33.0 0.1M-4.1 0.2L0.7 0.6M-4.1 0.2L-5.5 3.5M-4.1 0.2L-2.0 2.6M0.7 0.6L4.2 0.1M0.7 0.6L-2.0 2.6M0.7 0.6L1.2 2.7M4.2 0.1L7.2 0.6M4.2 0.1L1.2 2.7M4.2 0.1L5.3 2.9M7.2 0.6L10.7 0.0M7.2 0.6L5.3 2.9M7.2 0.6L9.3 2.8M10.7 0.0L14.7 -0.4M10.7 0.0L9.3 2.8M10.7 0.0L12.6 3.7M14.7 -0.4L18.2 -0.5M14.7 -0.4L12.6 3.7M14.7 -0.4L16.8 2.9M18.2 -0.5L21.2 0.5M18.2 -0.5L16.8 2.9M18.2 -0.5L20.3 3.5M21.2 0.5L24.7 0.2M21.2 0.5L20.3 3.5M21.2 0.5L23.3 3.5M24.7 0.2L29.5 0.6M24.7 0.2L23.3 3.5M24.7 0.2L26.8 2.6M29.5 0.6L33.0 0.1M29.5 0.6L26.8 2.6M29.5 0.6L30.0 2.7M-2.0 2.6L1.2 2.7M-2.0 2.6L-2.9 6.0M-2.0 2.6L0.5 6.7M1.2 2.7L5.3 2.9M1.2 2.7L0.5 6.7M1.2 2.7L2.9 5.8M5.3 2.9L9.3 2.8M5.3 2.9L2.9 5.8M5.3 2.9L7.8 6.8M9.3 2.8L12.6 3.7M9.3 2.8L7.8 6.8M9.3 2.8L10.8 6.8M12.6 3.7L16.8 2.9M12.6 3.7L10.8 6.8M12.6 3.7L15.0 6.2M16.8 2.9L20.3 3.5M16.8 2.9L15.0 6.2M16.8 2.9L18.6 6.0M20.3 3.5L23.3 3.5M20.3 3.5L18.6 6.0M20.3 3.5L20.9 6.2M23.3 3.5L26.8 2.6M23.3 3.5L20.9 6.2M23.3 3.5L25.9 6.0M26.8 2.6L30.0 2.7M26.8 2.6L25.9 6.0M26.8 2.6L29.3 6.7M30.0 2.7L34.1 2.9M30.0 2.7L29.3 6.7M30.0 2.7L31.7 5.8M-2.9 6.0L0.5 6.7M-2.9 6.0L-5.9 9.8M-2.9 6.0L-2.5 9.4M0.5 6.7L2.9 5.8M0.5 6.7L-2.5 9.4M0.5 6.7L2.0 9.4M2.9 5.8L7.8 6.8M2.9 5.8L2.0 9.4M2.9 5.8L5.3 9.4M7.8 6.8L10.8 6.8M7.8 6.8L5.3 9.4M7.8 6.8L9.3 10.1M10.8 6.8L15.0 6.2M10.8 6.8L9.3 10.1M10.8 6.8L12.4 10.1M15.0 6.2L18.6 6.0M15.0 6.2L12.4 10.1M15.0 6.2L16.9 9.9M18.6 6.0L20.9 6.2M18.6 6.0L16.9 9.9M18.6 6.0L20.2 9.0M20.9 6.2L25.9 6.0M20.9 6.2L20.2 9.0M20.9 6.2L22.9 9.8M25.9 6.0L29.3 6.7M25.9 6.0L22.9 9.8M25.9 6.0L26.3 9.4M29.3 6.7L31.7 5.8M29.3 6.7L26.3 9.4M29.3 6.7L30.8 9.4M-2.5 9.4L2.0 9.4M-2.5 9.4L-3.4 13.1M-2.5 9.4L0.2 12.9M2.0 9.4L5.3 9.4M2.0 9.4L0.2 12.9M2.0 9.4L3.4 13.3M5.3 9.4L9.3 10.1M5.3 9.4L3.4 13.3M5.3 9.4L7.6 13.2M9.3 10.1L12.4 10.1M9.3 10.1L7.6 13.2M9.3 10.1L11.4 12.8M12.4 10.1L16.9 9.9M12.4 10.1L11.4 12.8M12.4 10.1L14.4 12.8M16.9 9.9L20.2 9.0M16.9 9.9L14.4 12.8M16.9 9.9L18.2 12.5M20.2 9.0L22.9 9.8M20.2 9.0L18.2 12.5M20.2 9.0L21.0 13.4M22.9 9.8L26.3 9.4M22.9 9.8L21.0 13.4M22.9 9.8L25.4 13.1M26.3 9.4L30.8 9.4M26.3 9.4L25.4 13.1M26.3 9.4L29.0 12.9M30.8 9.4L34.1 9.4M30.8 9.4L29.0 12.9M30.8 9.4L32.2 13.3M-3.4 13.1L0.2 12.9M-3.4 13.1L-6.1 16.3M-3.4 13.1L-2.4 15.8M0.2 12.9L3.4 13.3M0.2 12.9L-2.4 15.8M0.2 12.9L1.9 15.6M3.4 13.3L7.6 13.2M3.4 13.3L1.9 15.6M3.4 13.3L5.4 16.1M7.6 13.2L11.4 12.8M7.6 13.2L5.4 16.1M7.6 13.2L8.8 16.6M11.4 12.8L14.4 12.8M11.4 12.8L8.8 16.6M11.4 12.8L12.7 16.5M14.4 12.8L18.2 12.5M14.4 12.8L12.7 16.5M14.4 12.8L16.4 16.1M18.2 12.5L21.0 13.4M18.2 12.5L16.4 16.1M18.2 12.5L19.4 16.5M21.0 13.4L25.4 13.1M21.0 13.4L19.4 16.5M21.0 13.4L22.7 16.3M25.4 13.1L29.0 12.9M25.4 13.1L22.7 16.3M25.4 13.1L26.4 15.8M29.0 12.9L32.2 13.3M29.0 12.9L26.4 15.8M29.0 12.9L30.7 15.6M-2.4 15.8L1.9 15.6M-2.4 15.8L-4.3 19.1M-2.4 15.8L-0.1 19.1M1.9 15.6L5.4 16.1M1.9 15.6L-0.1 19.1M1.9 15.6L3.2 18.6M5.4 16.1L8.8 16.6M5.4 16.1L3.2 18.6M5.4 16.1L7.9 18.8M8.8 16.6L12.7 16.5M8.8 16.6L7.9 18.8M8.8 16.6L11.1 19.2M12.7 16.5L16.4 16.1M12.7 16.5L11.1 19.2M12.7 16.5L14.1 18.8M16.4 16.1L19.4 16.5M16.4 16.1L14.1 18.8M16.4 16.1L17.4 19.2M19.4 16.5L22.7 16.3M19.4 16.5L17.4 19.2M19.4 16.5L20.9 18.9M22.7 16.3L26.4 15.8M22.7 16.3L20.9 18.9M22.7 16.3L24.5 19.1M26.4 15.8L30.7 15.6M26.4 15.8L24.5 19.1M26.4 15.8L28.7 19.1M30.7 15.6L34.2 16.1M30.7 15.6L28.7 19.1M30.7 15.6L32.0 18.6M-4.3 19.1L-0.1 19.1M-4.3 19.1L-4.9 22.0M-4.3 19.1L-1.4 22.7M-0.1 19.1L3.2 18.6M-0.1 19.1L-1.4 22.7M-0.1 19.1L2.1 23.0M3.2 18.6L7.9 18.8M3.2 18.6L2.1 23.0M3.2 18.6L5.1 21.9M7.9 18.8L11.1 19.2M7.9 18.8L5.1 21.9M7.9 18.8L9.4 22.7M11.1 19.2L14.1 18.8M11.1 19.2L9.4 22.7M11.1 19.2L12.2 22.2M14.1 18.8L17.4 19.2M14.1 18.8L12.2 22.2M14.1 18.8L16.2 23.0M17.4 19.2L20.9 18.9M17.4 19.2L16.2 23.0M17.4 19.2L20.3 22.1M20.9 18.9L24.5 19.1M20.9 18.9L20.3 22.1M20.9 18.9L23.9 22.0M24.5 19.1L28.7 19.1M24.5 19.1L23.9 22.0M24.5 19.1L27.4 22.7M28.7 19.1L32.0 18.6M28.7 19.1L27.4 22.7M28.7 19.1L30.9 23.0M-1.4 22.7L2.1 23.0M-1.4 22.7L-4.1 25.8M-1.4 22.7L0.7 26.2M2.1 23.0L5.1 21.9M2.1 23.0L0.7 26.2M2.1 23.0L4.2 25.7M5.1 21.9L9.4 22.7M5.1 21.9L4.2 25.7M5.1 21.9L7.2 26.2M9.4 22.7L12.2 22.2M9.4 22.7L7.2 26.2M9.4 22.7L10.7 25.6M12.2 22.2L16.2 23.0M12.2 22.2L10.7 25.6M12.2 22.2L14.7 25.2M16.2 23.0L20.3 22.1M16.2 23.0L14.7 25.2M16.2 23.0L18.2 25.1M20.3 22.1L23.9 22.0M20.3 22.1L18.2 25.1M20.3 22.1L21.2 26.1M23.9 22.0L27.4 22.7M23.9 22.0L21.2 26.1M23.9 22.0L24.7 25.8M27.4 22.7L30.9 23.0M27.4 22.7L24.7 25.8M27.4 22.7L29.5 26.2M30.9 23.0L33.9 21.9M30.9 23.0L29.5 26.2M30.9 23.0L33.0 25.7M-4.1 25.8L0.7 26.2M-4.1 25.8L-5.5 29.1M-4.1 25.8L-2.0 28.2M0.7 26.2L4.2 25.7M0.7 26.2L-2.0 28.2M0.7 26.2L1.2 28.3M4.2 25.7L7.2 26.2M4.2 25.7L1.2 28.3M4.2 25.7L5.3 28.5M7.2 26.2L10.7 25.6M7.2 26.2L5.3 28.5M7.2 26.2L9.3 28.4M10.7 25.6L14.7 25.2M10.7 25.6L9.3 28.4M10.7 25.6L12.6 29.3M14.7 25.2L18.2 25.1M14.7 25.2L12.6 29.3M14.7 25.2L16.8 28.5M18.2 25.1L21.2 26.1M18.2 25.1L16.8 28.5M18.2 25.1L20.3 29.1M21.2 26.1L24.7 25.8M21.2 26.1L20.3 29.1M21.2 26.1L23.3 29.1M24.7 25.8L29.5 26.2M24.7 25.8L23.3 29.1M24.7 25.8L26.8 28.2M29.5 26.2L33.0 25.7M29.5 26.2L26.8 28.2M29.5 26.2L30.0 28.3" fill="none" stroke="#1e1e14" stroke-width="0.5" /></pattern>
<pattern id="meshp" width="20.80" height="17.60" patternUnits="userSpaceOnUse" patternTransform="rotate(-38)"><path d="M-1.8 -2.6L1.5 -2.5M-1.8 -2.6L-2.5 -0.5M-1.8 -2.6L-0.3 0.0M1.5 -2.5L4.1 -1.8M1.5 -2.5L-0.3 0.0M1.5 -2.5L2.8 0.4M4.1 -1.8L6.3 -2.1M4.1 -1.8L2.8 0.4M4.1 -1.8L5.1 0.3M6.3 -2.1L9.5 -2.1M6.3 -2.1L5.1 0.3M6.3 -2.1L7.9 0.4M9.5 -2.1L11.9 -2.4M9.5 -2.1L7.9 0.4M9.5 -2.1L10.2 -0.4M11.9 -2.4L14.1 -1.8M11.9 -2.4L10.2 -0.4M11.9 -2.4L13.4 0.5M14.1 -1.8L17.4 -2.2M14.1 -1.8L13.4 0.5M14.1 -1.8L16.1 -0.1M17.4 -2.2L19.0 -2.6M17.4 -2.2L16.1 -0.1M17.4 -2.2L18.3 -0.5M19.0 -2.6L22.3 -2.5M19.0 -2.6L18.3 -0.5M19.0 -2.6L20.5 0.0M22.3 -2.5L24.9 -1.8M22.3 -2.5L20.5 0.0M22.3 -2.5L23.6 0.4M-2.5 -0.5L-0.3 0.0M-2.5 -0.5L-3.9 2.2M-2.5 -0.5L-1.4 2.3M-0.3 0.0L2.8 0.4M-0.3 0.0L-1.4 2.3M-0.3 0.0L1.2 2.3M2.8 0.4L5.1 0.3M2.8 0.4L1.2 2.3M2.8 0.4L3.9 2.4M5.1 0.3L7.9 0.4M5.1 0.3L3.9 2.4M5.1 0.3L6.4 2.6M7.9 0.4L10.2 -0.4M7.9 0.4L6.4 2.6M7.9 0.4L9.3 2.6M10.2 -0.4L13.4 0.5M10.2 -0.4L9.3 2.6M10.2 -0.4L12.1 2.7M13.4 0.5L16.1 -0.1M13.4 0.5L12.1 2.7M13.4 0.5L14.3 2.7M16.1 -0.1L18.3 -0.5M16.1 -0.1L14.3 2.7M16.1 -0.1L16.9 2.2M18.3 -0.5L20.5 0.0M18.3 -0.5L16.9 2.2M18.3 -0.5L19.4 2.3M20.5 0.0L23.6 0.4M20.5 0.0L19.4 2.3M20.5 0.0L22.0 2.3M-1.4 2.3L1.2 2.3M-1.4 2.3L-3.1 4.5M-1.4 2.3L0.1 4.0M1.2 2.3L3.9 2.4M1.2 2.3L0.1 4.0M1.2 2.3L2.8 4.0M3.9 2.4L6.4 2.6M3.9 2.4L2.8 4.0M3.9 2.4L5.6 4.0M6.4 2.6L9.3 2.6M6.4 2.6L5.6 4.0M6.4 2.6L8.2 4.9M9.3 2.6L12.1 2.7M9.3 2.6L8.2 4.9M9.3 2.6L9.9 4.7M12.1 2.7L14.3 2.7M12.1 2.7L9.9 4.7M12.1 2.7L12.8 4.0M14.3 2.7L16.9 2.2M14.3 2.7L12.8 4.0M14.3 2.7L15.8 4.5M16.9 2.2L19.4 2.3M16.9 2.2L15.8 4.5M16.9 2.2L17.7 4.5M19.4 2.3L22.0 2.3M19.4 2.3L17.7 4.5M19.4 2.3L20.9 4.0M22.0 2.3L24.7 2.4M22.0 2.3L20.9 4.0M22.0 2.3L23.6 4.0M-3.1 4.5L0.1 4.0M-3.1 4.5L-3.8 6.7M-3.1 4.5L-1.1 6.2M0.1 4.0L2.8 4.0M0.1 4.0L-1.1 6.2M0.1 4.0L0.7 6.9M2.8 4.0L5.6 4.0M2.8 4.0L0.7 6.9M2.8 4.0L4.2 6.7M5.6 4.0L8.2 4.9M5.6 4.0L4.2 6.7M5.6 4.0L6.1 6.3M8.2 4.9L9.9 4.7M8.2 4.9L6.1 6.3M8.2 4.9L9.3 6.3M9.9 4.7L12.8 4.0M9.9 4.7L9.3 6.3M9.9 4.7L11.6 6.3M12.8 4.0L15.8 4.5M12.8 4.0L11.6 6.3M12.8 4.0L14.4 6.1M15.8 4.5L17.7 4.5M15.8 4.5L14.4 6.1M15.8 4.5L17.0 6.7M17.7 4.5L20.9 4.0M17.7 4.5L17.0 6.7M17.7 4.5L19.7 6.2M20.9 4.0L23.6 4.0M20.9 4.0L19.7 6.2M20.9 4.0L21.5 6.9M-1.1 6.2L0.7 6.9M-1.1 6.2L-2.5 8.8M-1.1 6.2L-0.3 8.5M0.7 6.9L4.2 6.7M0.7 6.9L-0.3 8.5M0.7 6.9L2.4 8.3M4.2 6.7L6.1 6.3M4.2 6.7L2.4 8.3M4.2 6.7L5.7 8.7M6.1 6.3L9.3 6.3M6.1 6.3L5.7 8.7M6.1 6.3L8.2 9.2M9.3 6.3L11.6 6.3M9.3 6.3L8.2 9.2M9.3 6.3L10.2 9.1M11.6 6.3L14.4 6.1M11.6 6.3L10.2 9.1M11.6 6.3L12.7 8.7M14.4 6.1L17.0 6.7M14.4 6.1L12.7 8.7M14.4 6.1L16.1 8.8M17.0 6.7L19.7 6.2M17.0 6.7L16.1 8.8M17.0 6.7L18.3 8.8M19.7 6.2L21.5 6.9M19.7 6.2L18.3 8.8M19.7 6.2L20.5 8.5M21.5 6.9L25.0 6.7M21.5 6.9L20.5 8.5M21.5 6.9L23.2 8.3M-2.5 8.8L-0.3 8.5M-2.5 8.8L-4.0 11.2M-2.5 8.8L-1.1 10.9M-0.3 8.5L2.4 8.3M-0.3 8.5L-1.1 10.9M-0.3 8.5L1.9 11.0M2.4 8.3L5.7 8.7M2.4 8.3L1.9 11.0M2.4 8.3L4.3 11.0M5.7 8.7L8.2 9.2M5.7 8.7L4.3 11.0M5.7 8.7L6.6 10.8M8.2 9.2L10.2 9.1M8.2 9.2L6.6 10.8M8.2 9.2L9.6 11.1M10.2 9.1L12.7 8.7M10.2 9.1L9.6 11.1M10.2 9.1L12.1 10.6M12.7 8.7L16.1 8.8M12.7 8.7L12.1 10.6M12.7 8.7L14.4 10.7M16.1 8.8L18.3 8.8M16.1 8.8L14.4 10.7M16.1 8.8L16.8 11.2M18.3 8.8L20.5 8.5M18.3 8.8L16.8 11.2M18.3 8.8L19.7 10.9M20.5 8.5L23.2 8.3M20.5 8.5L19.7 10.9M20.5 8.5L22.7 11.0M-1.1 10.9L1.9 11.0M-1.1 10.9L-2.4 13.4M-1.1 10.9L0.4 13.2M1.9 11.0L4.3 11.0M1.9 11.0L0.4 13.2M1.9 11.0L2.9 13.6M4.3 11.0L6.6 10.8M4.3 11.0L2.9 13.6M4.3 11.0L5.2 13.1M6.6 10.8L9.6 11.1M6.6 10.8L5.2 13.1M6.6 10.8L8.0 12.9M9.6 11.1L12.1 10.6M9.6 11.1L8.0 12.9M9.6 11.1L10.5 12.8M12.1 10.6L14.4 10.7M12.1 10.6L10.5 12.8M12.1 10.6L12.5 13.6M14.4 10.7L16.8 11.2M14.4 10.7L12.5 13.6M14.4 10.7L15.3 13.0M16.8 11.2L19.7 10.9M16.8 11.2L15.3 13.0M16.8 11.2L18.4 13.4M19.7 10.9L22.7 11.0M19.7 10.9L18.4 13.4M19.7 10.9L21.2 13.2M22.7 11.0L25.1 11.0M22.7 11.0L21.2 13.2M22.7 11.0L23.7 13.6M-2.4 13.4L0.4 13.2M-2.4 13.4L-3.4 15.4M-2.4 13.4L-1.8 15.0M0.4 13.2L2.9 13.6M0.4 13.2L-1.8 15.0M0.4 13.2L1.5 15.1M2.9 13.6L5.2 13.1M2.9 13.6L1.5 15.1M2.9 13.6L4.1 15.8M5.2 13.1L8.0 12.9M5.2 13.1L4.1 15.8M5.2 13.1L6.3 15.5M8.0 12.9L10.5 12.8M8.0 12.9L6.3 15.5M8.0 12.9L9.5 15.5M10.5 12.8L12.5 13.6M10.5 12.8L9.5 15.5M10.5 12.8L11.9 15.2M12.5 13.6L15.3 13.0M12.5 13.6L11.9 15.2M12.5 13.6L14.1 15.8M15.3 13.0L18.4 13.4M15.3 13.0L14.1 15.8M15.3 13.0L17.4 15.4M18.4 13.4L21.2 13.2M18.4 13.4L17.4 15.4M18.4 13.4L19.0 15.0M21.2 13.2L23.7 13.6M21.2 13.2L19.0 15.0M21.2 13.2L22.3 15.1M-1.8 15.0L1.5 15.1M-1.8 15.0L-2.5 17.1M-1.8 15.0L-0.3 17.6M1.5 15.1L4.1 15.8M1.5 15.1L-0.3 17.6M1.5 15.1L2.8 18.0M4.1 15.8L6.3 15.5M4.1 15.8L2.8 18.0M4.1 15.8L5.1 17.9M6.3 15.5L9.5 15.5M6.3 15.5L5.1 17.9M6.3 15.5L7.9 18.0M9.5 15.5L11.9 15.2M9.5 15.5L7.9 18.0M9.5 15.5L10.2 17.2M11.9 15.2L14.1 15.8M11.9 15.2L10.2 17.2M11.9 15.2L13.4 18.1M14.1 15.8L17.4 15.4M14.1 15.8L13.4 18.1M14.1 15.8L16.1 17.5M17.4 15.4L19.0 15.0M17.4 15.4L16.1 17.5M17.4 15.4L18.3 17.1M19.0 15.0L22.3 15.1M19.0 15.0L18.3 17.1M19.0 15.0L20.5 17.6M22.3 15.1L24.9 15.8M22.3 15.1L20.5 17.6M22.3 15.1L23.6 18.0M-2.5 17.1L-0.3 17.6M-2.5 17.1L-3.9 19.8M-2.5 17.1L-1.4 19.9M-0.3 17.6L2.8 18.0M-0.3 17.6L-1.4 19.9M-0.3 17.6L1.2 19.9M2.8 18.0L5.1 17.9M2.8 18.0L1.2 19.9M2.8 18.0L3.9 20.0M5.1 17.9L7.9 18.0M5.1 17.9L3.9 20.0M5.1 17.9L6.4 20.2M7.9 18.0L10.2 17.2M7.9 18.0L6.4 20.2M7.9 18.0L9.3 20.2M10.2 17.2L13.4 18.1M10.2 17.2L9.3 20.2M10.2 17.2L12.1 20.3M13.4 18.1L16.1 17.5M13.4 18.1L12.1 20.3M13.4 18.1L14.3 20.3M16.1 17.5L18.3 17.1M16.1 17.5L14.3 20.3M16.1 17.5L16.9 19.8M18.3 17.1L20.5 17.6M18.3 17.1L16.9 19.8M18.3 17.1L19.4 19.9M20.5 17.6L23.6 18.0M20.5 17.6L19.4 19.9M20.5 17.6L22.0 19.9" fill="none" stroke="#0e141a" stroke-width="0.55" /></pattern>
</defs>
<polygon points="931.6,738 1232,595.6 1483.8,791.7 1245.4,985.5 1158.6,985.5" fill="#7a8a8c" stroke="#2a3232" stroke-width="0.7"/>
<polygon points="931.6,738 932.7,752 1144,985.5 1158.6,985.5" fill="#84989a" stroke="#2a3232" stroke-width="0.6"/>
<polygon points="1483.8,791.7 1481.2,805.4 1259.8,985.5 1245.4,985.5" fill="#76878a" stroke="#2a3232" stroke-width="0.6"/>
<path d="M1232 595.6 L1198.6 985.5" stroke="#2a3232" stroke-width="0.8" fill="none"/>
<path d="M932.3 746 L1151 985.5" stroke="#2a3232" stroke-width="0.5" stroke-dasharray="4 2" fill="none"/>
<path d="M1482.5 798.5 L1252.6 985.5" stroke="#2a3232" stroke-width="0.5" stroke-dasharray="4 2" fill="none"/>
<polygon points="1149.1,264.5 1144.6,325.7 1160.5,342.6 1186.8,355.7 1444.5,396.5 1426.1,421.4 1205.2,382 1178.9,376.7 1142.1,350.4 1134.6,302.3" fill="#2e4669" />
<polygon points="1149.1,264.5 1144.6,325.7 1152.4,335.7 1134.6,302.3" fill="#131d33" />
<polygon points="1100,326.8 1139.4,326.8 1168.4,363.6 1205.2,382 1426.1,421.4 1460,429.3 1460,463.5 1378.7,458.2 1131.5,418.9 1131.5,400 1100,400" fill="#5a7eb2" />
<polygon points="940.6,267.9 941,276.1 986.2,305.1 979.5,309.5 914.3,321.8 915,329.5 916.1,358.5 916.6,366.3 916.6,371.8 917.9,379.6 1019.6,465.3 1127.9,435.1 1131.5,418.9 1190,424.7 1190,357.9 1165.8,344.6 1144.6,326.8 1149.1,264.5 1121.3,248.9 962.9,281.9" fill="#43628f" />
<polygon points="940.6,267.9 962.9,281.9 1002.9,277.3 1009.6,293.3 986.2,297.3" fill="#2e4669" />
<polygon points="940.6,267.9 986.2,297.3 986.2,305.1 941,276.1" fill="#5a7eb2" />
<polygon points="986.2,297.3 1009.6,293.3 1009.6,302.8 997.3,306.2 986.2,305.1" fill="#5a7eb2" />
<polygon points="997.3,306.2 1010.7,302.4 1010.7,295.1 1009.6,277.3 962.9,281.9 1110,251 1121.3,248.9 1149.1,264.5 1134.6,302.3 1020,323.4" fill="#2e4669" />
<polygon points="997.3,306.2 1021.8,326.2 1021.8,346.2 1002.9,330.7" fill="#5a7eb2" />
<polygon points="1020,323.4 1134.6,302.3 1143.5,329 1155.7,355.7 1170.2,369.1 1190,378 1190,424.7 1131.5,418.9 1128.5,432 1086.8,418 1086.8,389.1 1107.9,384.6 1110.1,378 1111.2,355.7 1103.5,350.8 1089.7,343.5 1089.7,331.7 1075.6,334.6 1020,343.5" fill="#5a7eb2" />
<polygon points="1149.1,264.5 1134.6,302.3 1140.2,316.8 1145.1,327.2 1152.4,334.6 1146.2,313.4" fill="#0f1828" />
<polygon points="1145.1,327.2 1152.4,335.2 1165.8,344.6 1190,357.9 1190,378 1170.2,369.1 1155.7,355.7 1143.5,329" fill="#2e4669" />
<polygon points="1020,343.5 1075.6,334.6 1089.7,343.5 1104.6,352.4 1104.6,384.6 1086.8,389.1 1086.8,418 1043.4,404.7 1018.9,373.5" fill="#2e4669" />
<polygon points="1043.4,342.4 1074.5,335.7 1104.6,352.4 1076.8,362.4" fill="#2e4669" />
<polygon points="1043.4,342.4 1076.8,362.4 1076.8,393.5 1043.4,375.7" fill="#43628f" />
<polygon points="1076.8,362.4 1104.6,352.4 1104.6,384.6 1086.8,389.1 1076.8,393.5" fill="#1e3357" />
<polygon points="914.3,321.8 979.5,309.5 997.3,306.2 1002.9,330.7 1021.8,346.2 1020.7,348.5 967.3,364" fill="#2e4669" />
<polygon points="914.3,321.8 967.3,364 967.3,369.6 915,329.5" fill="#43628f" />
<polygon points="967.3,364 1020.7,348.5 1020.7,354 967.3,369.6" fill="#43628f" />
<polygon points="916.1,358.5 947.3,352.9 967.3,369.6 1017.4,355.1 1017.4,375.2 1025.2,386.3 965.1,399.6" fill="#2e4669" />
<polygon points="916.1,358.5 965.1,399.6 965.5,408.5 916.6,366.3" fill="#43628f" />
<polygon points="965.1,399.6 1025.2,386.3 1026.3,390.7 965.5,408.5" fill="#43628f" />
<polygon points="1016.3,354 1040.7,344 1041.2,379.6 1025.2,386.3 1017.4,375.2" fill="#5a7eb2" />
<polygon points="1036.3,345.8 1041.2,344 1041.6,379.6 1037.4,381.4" fill="#131d33" />
<polygon points="916.6,371.8 965.5,408.5 1043,386.3 1086.8,395.8 1086.8,418 1127.9,420 1019.6,450.8" fill="#2e4669" />
<polygon points="987.3,403 1029.6,390.7 1065,408.5 1038.5,419.7" fill="#43628f" />
<polygon points="916.6,371.8 1019.6,450.8 1019.6,465.3 917.9,379.6" fill="#43628f" />
<polygon points="1019.6,450.8 1127.9,420 1127.9,435.1 1019.6,465.3" fill="#5a7eb2" />
<path d="M1104.6 351.3 Q1111.2 353.5 1111.2 360.2 L1110.1 378 Q1109 384.6 1104.6 384.6 Z" fill="#466526" />
<path d="M1112 260.5 v7 a14.5 6 0 0 0 29 0 v-7 Z" fill="#c46e42"/>
<ellipse cx="1126.5" cy="260.5" rx="14.5" ry="6" fill="#e0875a"/>
<path d="M1103 285 v8 a15 6.5 0 0 0 30 0 v-8 Z" fill="#3c5c26"/>
<ellipse cx="1118" cy="285" rx="15" ry="6.5" fill="#4a6f30"/>
<clipPath id="cp1"><polygon points="1149.1,264.5 1144.6,325.7 1160.5,342.6 1186.8,355.7 1444.5,396.5 1426.1,421.4 1205.2,382 1178.9,376.7 1142.1,350.4 1134.6,302.3"/><polygon points="1100,326.8 1139.4,326.8 1168.4,363.6 1205.2,382 1426.1,421.4 1460,429.3 1460,463.5 1378.7,458.2 1131.5,418.9 1131.5,400 1100,400"/><polygon points="940.6,267.9 941,276.1 986.2,305.1 979.5,309.5 914.3,321.8 915,329.5 916.1,358.5 916.6,366.3 916.6,371.8 917.9,379.6 1019.6,465.3 1127.9,435.1 1131.5,418.9 1190,424.7 1190,357.9 1165.8,344.6 1144.6,326.8 1149.1,264.5 1121.3,248.9 962.9,281.9"/><path d="M1112 260.5 v7 a14.5 6 0 0 0 29 0 v-7 a14.5 6 0 0 0 -29 0 Z"/><path d="M1103 285 v8 a15 6.5 0 0 0 30 0 v-8 a15 6.5 0 0 0 -30 0 Z"/></clipPath>
<rect x="880" y="100" width="800" height="420" fill="url(#mesh)" clip-path="url(#cp1)"/>
<polygon points="1010.7,295.1 1019.6,301.3 1010.7,302.4" fill="#f1f1f1" />
<polygon points="913.5,329.9 941.9,351.5 914.5,357.8" fill="#f3f3f3" />
<polygon points="915,365.1 921.7,370.7 915.5,373.3" fill="#f2f2f2" />
<polygon points="1075.6,334.6 1089.7,331.7 1089.7,343.5" fill="#f1f1f1" />
<polygon points="1093.4,346.8 1103.5,350.8 1099,347.9" fill="#f1f1f1" />
<polygon points="1131.6,387.3 1151.3,408.3 1131.6,408.3" fill="#1d2d49" />
<polygon points="1156.5,385.9 1196,392 1176.3,408.3" fill="#1d2d49" />
<polygon points="1194.7,413.5 1215.7,400.4 1230.2,421.4" fill="#1d2d49" />
<polygon points="1235.4,397.8 1273.5,403.6 1253.8,420.1" fill="#1d2d49" />
<polygon points="1272.2,425.4 1293.3,412.2 1307.7,432" fill="#1d2d49" />
<polygon points="1313,409.6 1351.1,414.9 1331.4,430.6" fill="#1d2d49" />
<polygon points="1348.5,435.9 1369.5,424.1 1384,443.8" fill="#1d2d49" />
<polygon points="1389.2,421.4 1415.5,424.1 1405,439.8" fill="#1d2d49" />
<path d="M1378.7 456.9 L1379.3 478 Q1391.9 488.5 1405 478 L1406.3 458.2 Z" fill="#43628f" />
<polygon points="1400,390 1444.5,395 1420.2,421.3 1480.9,421.3 1550.7,453.7 1549.6,463.8 1541.6,473.9 1537.5,474.9 1406.1,461.8 1400,459.8" fill="#43628f" />
<polygon points="1400,390 1444.5,395 1414.2,429.4 1400,429.4" fill="#2e4669" />
<polygon points="1420.2,445.6 1450.6,441.6 1454.6,451.7 1424.3,450.7" fill="#131d33" />
<polygon points="1468.8,439.5 1480.9,441.6 1476.8,446" fill="#131d33" />
<path d="M1503.1 332.4 L1505.2 321.2 L1518.3 318.6 L1578 336.4 L1583 343.5 L1578 360.7 L1589.1 378.9 L1588.1 387 L1583 395 L1571.9 439.5 L1550.7 452.7 Q1505.2 455.7 1477.9 431.4 L1474.8 364.7 L1480.9 348.5 L1495 343.5 L1497.1 334.4 Z" fill="#5a7eb2" />
<polygon points="1513.2,413.2 1541.6,395 1583,395 1571.9,439.5 1550.7,452.7 1521.3,449.6 1487,429.4" fill="#6084b8" />
<path d="M1477.9 431.4 Q1511.2 455.7 1571.9 439.5 L1550.7 452.7 Q1511.2 461.8 1474.8 439.5 Z" fill="#2e4669" />
<polygon points="1545.6,387 1561.8,368.8 1578,370.8 1586,389 1582,395 1545.6,397.1" fill="#5a7eb2" />
<polygon points="1561.8,369.8 1575.9,370.8 1579,384.9 1568.9,389" fill="#2e4669" />
<polygon points="1518.8,315.4 1579.5,324.8 1580.6,331.9 1507.5,326.7" fill="#43628f" />
<clipPath id="cp2"><polygon points="1131.6,387.3 1151.3,408.3 1131.6,408.3"/><polygon points="1156.5,385.9 1196,392 1176.3,408.3"/><polygon points="1194.7,413.5 1215.7,400.4 1230.2,421.4"/><polygon points="1235.4,397.8 1273.5,403.6 1253.8,420.1"/><polygon points="1272.2,425.4 1293.3,412.2 1307.7,432"/><polygon points="1313,409.6 1351.1,414.9 1331.4,430.6"/><polygon points="1348.5,435.9 1369.5,424.1 1384,443.8"/><polygon points="1389.2,421.4 1415.5,424.1 1405,439.8"/><path d="M1378.7 456.9 L1379.3 478 Q1391.9 488.5 1405 478 L1406.3 458.2 Z"/><polygon points="1400,390 1444.5,395 1420.2,421.3 1480.9,421.3 1550.7,453.7 1549.6,463.8 1541.6,473.9 1537.5,474.9 1406.1,461.8 1400,459.8"/><path d="M1503.1 332.4 L1505.2 321.2 L1518.3 318.6 L1578 336.4 L1583 343.5 L1578 360.7 L1589.1 378.9 L1588.1 387 L1583 395 L1571.9 439.5 L1550.7 452.7 Q1505.2 455.7 1477.9 431.4 L1474.8 364.7 L1480.9 348.5 L1495 343.5 L1497.1 334.4 Z"/><polygon points="1518.8,315.4 1579.5,324.8 1580.6,331.9 1507.5,326.7"/></clipPath>
<rect x="880" y="100" width="800" height="420" fill="url(#mesh)" clip-path="url(#cp2)"/>
<path d="M1524.5 287.9 L1536.6 273.4 L1552.8 254 L1569 240.2 L1590 233.7 L1609.4 232.1 L1625.6 237.8 L1636.1 245.9 L1632 257.2 L1619.1 281.5 L1602.9 305.7 L1586.7 325.1 L1578.7 325.9 L1547.9 323.5 L1518 317 L1522.9 297.6 Z" fill="#7d8fa0" />
<clipPath id="cp3"><path d="M1524.5 287.9 L1536.6 273.4 L1552.8 254 L1569 240.2 L1590 233.7 L1609.4 232.1 L1625.6 237.8 L1636.1 245.9 L1632 257.2 L1619.1 281.5 L1602.9 305.7 L1586.7 325.1 L1578.7 325.9 L1547.9 323.5 L1518 317 L1522.9 297.6 Z"/></clipPath>
<rect x="880" y="100" width="800" height="420" fill="url(#meshp)" clip-path="url(#cp3)"/>
<polygon points="1523.3,300.1 1535.8,306.5 1551.2,315.1 1570.2,313.5 1577.8,317 1577.5,325.5 1547.9,323.5 1518.5,317" fill="#56708f" />
<polygon points="1522.4,308.1 1544.7,317 1570.6,322.2 1570.6,319 1544.7,313 1524,304.1" fill="#93acc9" />
<polygon points="1539.8,288.7 1554.4,296 1573,295.2 1569.8,313 1551.2,314.6 1535.8,305.7" fill="#5a7bac" />
<polygon points="1540.7,282.3 1551.2,279.8 1567.3,282.3 1575.4,289.5 1570.6,295.2 1554.4,296 1539.8,288.7" fill="#2e4669" />
<clipPath id="cp4"><polygon points="1523.3,300.1 1535.8,306.5 1551.2,315.1 1570.2,313.5 1577.8,317 1577.5,325.5 1547.9,323.5 1518.5,317"/><polygon points="1539.8,288.7 1554.4,296 1573,295.2 1569.8,313 1551.2,314.6 1535.8,305.7"/><polygon points="1540.7,282.3 1551.2,279.8 1567.3,282.3 1575.4,289.5 1570.6,295.2 1554.4,296 1539.8,288.7"/></clipPath>
<rect x="880" y="100" width="800" height="420" fill="url(#mesh)" clip-path="url(#cp4)"/>
<path d="M1507.2 321.2 L1521.3 319.2 L1553.7 322.2 L1580 330.3 L1569.9 352.6 L1547.6 387 L1515.3 418.3 L1482.9 436.5 L1450.6 442.6 L1422.2 439.9 L1413.1 430.4 L1440.4 401.1 L1474.8 362.7 L1495 340.4 Z" fill="#8294a4" />
<clipPath id="cp5"><path d="M1507.2 321.2 L1521.3 319.2 L1553.7 322.2 L1580 330.3 L1569.9 352.6 L1547.6 387 L1515.3 418.3 L1482.9 436.5 L1450.6 442.6 L1422.2 439.9 L1413.1 430.4 L1440.4 401.1 L1474.8 362.7 L1495 340.4 Z"/></clipPath>
<rect x="880" y="100" width="800" height="420" fill="url(#meshp)" clip-path="url(#cp5)"/>
<polygon points="907.3,150 1056.6,137.8 1116,169.5 961,184.6" fill="#8b8a72" />
<polygon points="907.3,150 961,184.6 962.8,282 910,245.6" fill="#a6a58d" />
<path d="M961 184.6 L1108 170 Q1127.5 169 1127 190 L1125 232 Q1124 247 1110 251 L962.8 282 Z" fill="#c9c8ae" />
<path d="M907.3 150 L961 184.6 L962.8 282 M961 184.6 L1108 170" fill="none" stroke="#3a3a2c" stroke-width="0.8" opacity="0.7"/>
<g stroke-linecap="round">
<path d="M887.3 913.2 L893.6 886.5" stroke="#3fa64a" stroke-width="1.8"/><path d="M894.2 882.8 L897 887.2 L890.6 886.2 Z" fill="#3fa64a"/>
<path d="M887.3 913.2 L904.5 905" stroke="#c81e1e" stroke-width="1.7"/><circle cx="905.5" cy="904.6" r="2.2" fill="#d01818"/>
<path d="M887.3 913.2 L911 929" stroke="#6a6af0" stroke-width="1.9"/><path d="M915 931.5 L910 932.8 L912.6 926.6 Z" fill="#6a6af0"/>
</g>
<text x="888.6" y="877.3" font-family="Liberation Sans, sans-serif" font-size="24" font-weight="bold" font-style="italic" fill="#3cb04a">Y</text>
<text x="905" y="905.1" font-family="Liberation Sans, sans-serif" font-size="17" font-weight="bold" font-style="italic" fill="#d01818">X</text>
<text x="914" y="941.5" font-family="Liberation Sans, sans-serif" font-size="24" font-weight="bold" font-style="italic" fill="#6c6cf4">Z</text>
<clipPath id="cp6"><polygon points="907.3,150 1056.6,137.8 1116,169.5 961,184.6"/><polygon points="907.3,150 961,184.6 962.8,282 910,245.6"/><path d="M961 184.6 L1108 170 Q1127.5 169 1127 190 L1125 232 Q1124 247 1110 251 L962.8 282 Z"/></clipPath>
<rect x="880" y="100" width="800" height="420" fill="url(#meshb)" clip-path="url(#cp6)"/>
</svg>
</div>
<div class="abs" style="left:1668px;top:104px;width:216px;height:177px;border:1px solid #a9d9ea;border-radius:4px;background:rgba(255,255,255,0.35)"></div>
<div class="abs" style="left:1680px;top:117px;width:8px;height:8px;border:1px solid #9a9ad8;border-radius:2px;background:#e6e6fa"><i class="abs" style="left:1px;top:2.5px;width:4px;height:1px;background:#2a2ad0"></i></div>
<div class="st" style="left:1691px;top:115px">Scene</div>
<div class="abs" style="left:1694px;top:134px;width:8px;height:8px;border:1px solid #9a9ad8;border-radius:2px;background:#e6e6fa"><i class="abs" style="left:1px;top:2.5px;width:4px;height:1px;background:#2a2ad0"></i></div>
<div class="st" style="left:1706px;top:132px">QuarterModel mesh</div>
<div class="abs" style="left:1708px;top:153px;width:8px;height:8px;border:1px solid #9a9ad8;border-radius:2px;background:#e6e6fa"><i class="abs" style="left:1px;top:2.5px;width:4px;height:1px;background:#2a2ad0"></i><i class="abs" style="left:2.5px;top:1px;width:1px;height:4px;background:#2a2ad0"></i></div>
<svg class="abs" style="left:1721px;top:151.5px" width="11" height="7" viewBox="0 0 11 7"><ellipse cx="5.5" cy="3.5" rx="5.3" ry="3.2" fill="#9a9a98"/><circle cx="5.5" cy="3.3" r="2" fill="#666"/></svg>
<div class="st" style="left:1737px;top:150px">volumeOnGeoVolumes_6</div>
<div class="abs" style="left:1708px;top:171px;width:8px;height:8px;border:1px solid #9a9ad8;border-radius:2px;background:#e6e6fa"><i class="abs" style="left:1px;top:2.5px;width:4px;height:1px;background:#2a2ad0"></i><i class="abs" style="left:2.5px;top:1px;width:1px;height:4px;background:#2a2ad0"></i></div>
<svg class="abs" style="left:1721px;top:169.5px" width="11" height="7" viewBox="0 0 11 7"><ellipse cx="5.5" cy="3.5" rx="5.3" ry="3.2" fill="#9a9a98"/><circle cx="5.5" cy="3.3" r="2" fill="#666"/></svg>
<div class="st" style="left:1737px;top:168px">volumeOnGeoVolumes_5</div>
<div class="abs" style="left:1708px;top:189px;width:8px;height:8px;border:1px solid #9a9ad8;border-radius:2px;background:#e6e6fa"><i class="abs" style="left:1px;top:2.5px;width:4px;height:1px;background:#2a2ad0"></i><i class="abs" style="left:2.5px;top:1px;width:1px;height:4px;background:#2a2ad0"></i></div>
<svg class="abs" style="left:1721px;top:187.5px" width="11" height="7" viewBox="0 0 11 7"><ellipse cx="5.5" cy="3.5" rx="5.3" ry="3.2" fill="#9a9a98"/><circle cx="5.5" cy="3.3" r="2" fill="#666"/></svg>
<div class="st" style="left:1737px;top:186px">volumeOnGeoVolumes_0</div>
<div class="abs" style="left:1708px;top:207px;width:8px;height:8px;border:1px solid #9a9ad8;border-radius:2px;background:#e6e6fa"><i class="abs" style="left:1px;top:2.5px;width:4px;height:1px;background:#2a2ad0"></i><i class="abs" style="left:2.5px;top:1px;width:1px;height:4px;background:#2a2ad0"></i></div>
<svg class="abs" style="left:1721px;top:205.5px" width="11" height="7" viewBox="0 0 11 7"><ellipse cx="5.5" cy="3.5" rx="5.3" ry="3.2" fill="#9a9a98"/><circle cx="5.5" cy="3.3" r="2" fill="#666"/></svg>
<div class="st" style="left:1737px;top:204px">volumeOnGeoVolumes_1</div>
<div class="abs" style="left:1708px;top:225px;width:8px;height:8px;border:1px solid #9a9ad8;border-radius:2px;background:#e6e6fa"><i class="abs" style="left:1px;top:2.5px;width:4px;height:1px;background:#2a2ad0"></i><i class="abs" style="left:2.5px;top:1px;width:1px;height:4px;background:#2a2ad0"></i></div>
<svg class="abs" style="left:1721px;top:223.5px" width="11" height="7" viewBox="0 0 11 7"><ellipse cx="5.5" cy="3.5" rx="5.3" ry="3.2" fill="#9a9a98"/><circle cx="5.5" cy="3.3" r="2" fill="#666"/></svg>
<div class="st" style="left:1737px;top:222px">volumeOnGeoVolumes_4</div>
<div class="abs" style="left:1708px;top:243px;width:8px;height:8px;border:1px solid #9a9ad8;border-radius:2px;background:#e6e6fa"><i class="abs" style="left:1px;top:2.5px;width:4px;height:1px;background:#2a2ad0"></i><i class="abs" style="left:2.5px;top:1px;width:1px;height:4px;background:#2a2ad0"></i></div>
<svg class="abs" style="left:1721px;top:241.5px" width="11" height="7" viewBox="0 0 11 7"><ellipse cx="5.5" cy="3.5" rx="5.3" ry="3.2" fill="#9a9a98"/><circle cx="5.5" cy="3.3" r="2" fill="#666"/></svg>
<div class="st" style="left:1737px;top:240px">volumeOnGeoVolumes_3</div>
<div class="abs" style="left:1708px;top:261px;width:8px;height:8px;border:1px solid #9a9ad8;border-radius:2px;background:#e6e6fa"><i class="abs" style="left:1px;top:2.5px;width:4px;height:1px;background:#2a2ad0"></i><i class="abs" style="left:2.5px;top:1px;width:1px;height:4px;background:#2a2ad0"></i></div>
<svg class="abs" style="left:1721px;top:259.5px" width="11" height="7" viewBox="0 0 11 7"><ellipse cx="5.5" cy="3.5" rx="5.3" ry="3.2" fill="#9a9a98"/><circle cx="5.5" cy="3.3" r="2" fill="#666"/></svg>
<div class="st" style="left:1737px;top:258px">volumeOnGeoVolumes_2</div>
<svg class="abs" style="left:1874px;top:271px" width="8" height="8" viewBox="0 0 8 8"><path d="M8 0 L0 8 M8 4 L4 8" stroke="#555" stroke-width="0.8"/></svg>
<div class="abs" style="left:824px;top:956px;width:178px;height:23px;border:1px solid #c2dce6;border-radius:3px;background:rgba(255,255,255,0.36)"></div>
<div class="st" style="left:831.4px;top:962px;color:#94acba;font-size:9.95px">volumeOnGeoVolumes_6</div>
<svg class="abs" style="left:994px;top:970px" width="7" height="7" viewBox="0 0 7 7"><path d="M7 0 L0 7 M7 3.5 L3.5 7" stroke="#555" stroke-width="0.8"/></svg>
<div class="abs" style="left:1770px;top:961px;width:123px;height:30px;background:#005d9a;border-radius:3px 3px 0 0"></div>
<svg class="abs" style="left:1779px;top:968px" width="22" height="16" viewBox="0 0 22 16"><ellipse cx="10.5" cy="7" rx="10.3" ry="6.8" fill="#fff"/><path d="M15 11 L21 14.5 L19 9 Z" fill="#fff"/><rect x="5.5" y="4" width="10" height="6.6" rx="0.8" fill="#005d9a"/><rect x="11" y="3" width="3" height="1.5" fill="#005d9a"/><circle cx="10.8" cy="7.3" r="2.2" fill="#fff"/><circle cx="10.8" cy="7.3" r="1.2" fill="#005d9a"/></svg>
<div class="t" id="rep" style="left:1809px;top:969.59px;font-size:11px;color:#fff;letter-spacing:-0.146px">Report an issue</div>
</body></html>
